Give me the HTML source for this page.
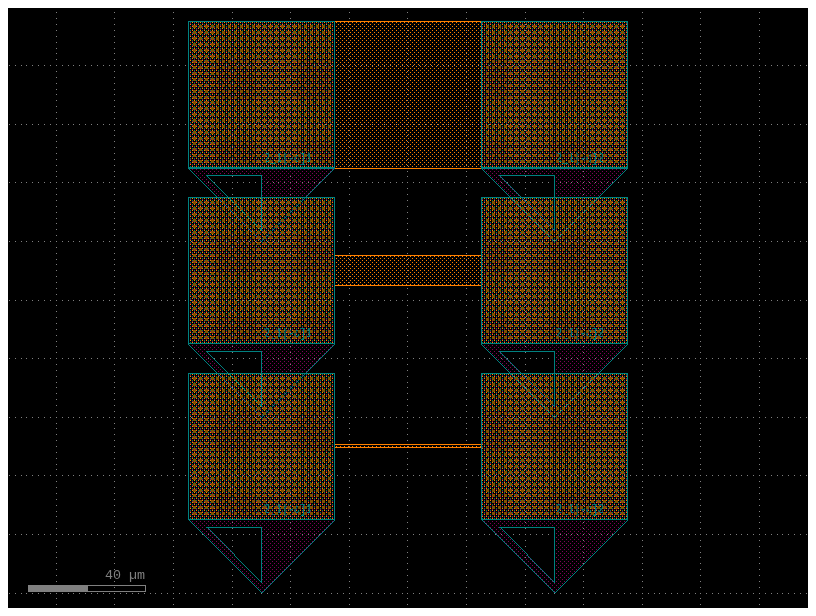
<!DOCTYPE html><html><head><meta charset="utf-8"><title>layout</title>
<style>html,body{margin:0;padding:0;background:#fff;overflow:hidden}svg{display:block;position:absolute;left:0;top:0}text{font-family:"Liberation Mono",monospace}</style></head><body>
<svg width="816" height="616" viewBox="0 0 816 616" shape-rendering="crispEdges">
<defs>
<pattern id="po" x="0" y="0" width="4" height="4" patternUnits="userSpaceOnUse"><rect x="0" y="2" width="1" height="1" fill="#ff8000"/><rect x="2" y="0" width="1" height="1" fill="#ff8000"/></pattern>
<pattern id="pg" x="0" y="0" width="4" height="4" patternUnits="userSpaceOnUse"><rect x="0" y="0" width="1" height="1" fill="#008050"/><rect x="2" y="2" width="1" height="1" fill="#008050"/></pattern>
<pattern id="pm" x="0" y="0" width="4" height="4" patternUnits="userSpaceOnUse"><rect x="0" y="1" width="1" height="1" fill="#800057"/><rect x="2" y="3" width="1" height="1" fill="#800057"/></pattern>
<clipPath id="vr0"><rect x="0" y="25" width="816" height="3"/><rect x="0" y="31" width="816" height="3"/><rect x="0" y="37" width="816" height="3"/><rect x="0" y="43" width="816" height="3"/><rect x="0" y="49" width="816" height="3"/><rect x="0" y="55" width="816" height="3"/><rect x="0" y="60" width="816" height="3"/><rect x="0" y="66" width="816" height="3"/><rect x="0" y="72" width="816" height="3"/><rect x="0" y="78" width="816" height="3"/><rect x="0" y="84" width="816" height="3"/><rect x="0" y="90" width="816" height="3"/><rect x="0" y="96" width="816" height="3"/><rect x="0" y="101" width="816" height="3"/><rect x="0" y="107" width="816" height="3"/><rect x="0" y="113" width="816" height="3"/><rect x="0" y="119" width="816" height="3"/><rect x="0" y="125" width="816" height="3"/><rect x="0" y="131" width="816" height="3"/><rect x="0" y="137" width="816" height="3"/><rect x="0" y="142" width="816" height="3"/><rect x="0" y="148" width="816" height="3"/><rect x="0" y="154" width="816" height="3"/><rect x="0" y="160" width="816" height="3"/></clipPath>
<clipPath id="vr1"><rect x="0" y="201" width="816" height="3"/><rect x="0" y="207" width="816" height="3"/><rect x="0" y="213" width="816" height="3"/><rect x="0" y="219" width="816" height="3"/><rect x="0" y="225" width="816" height="3"/><rect x="0" y="231" width="816" height="3"/><rect x="0" y="236" width="816" height="3"/><rect x="0" y="242" width="816" height="3"/><rect x="0" y="248" width="816" height="3"/><rect x="0" y="254" width="816" height="3"/><rect x="0" y="260" width="816" height="3"/><rect x="0" y="266" width="816" height="3"/><rect x="0" y="272" width="816" height="3"/><rect x="0" y="277" width="816" height="3"/><rect x="0" y="283" width="816" height="3"/><rect x="0" y="289" width="816" height="3"/><rect x="0" y="295" width="816" height="3"/><rect x="0" y="301" width="816" height="3"/><rect x="0" y="307" width="816" height="3"/><rect x="0" y="313" width="816" height="3"/><rect x="0" y="318" width="816" height="3"/><rect x="0" y="324" width="816" height="3"/><rect x="0" y="330" width="816" height="3"/><rect x="0" y="336" width="816" height="3"/></clipPath>
<clipPath id="vr2"><rect x="0" y="377" width="816" height="3"/><rect x="0" y="383" width="816" height="3"/><rect x="0" y="389" width="816" height="3"/><rect x="0" y="395" width="816" height="3"/><rect x="0" y="401" width="816" height="3"/><rect x="0" y="407" width="816" height="3"/><rect x="0" y="412" width="816" height="3"/><rect x="0" y="418" width="816" height="3"/><rect x="0" y="424" width="816" height="3"/><rect x="0" y="430" width="816" height="3"/><rect x="0" y="436" width="816" height="3"/><rect x="0" y="442" width="816" height="3"/><rect x="0" y="448" width="816" height="3"/><rect x="0" y="453" width="816" height="3"/><rect x="0" y="459" width="816" height="3"/><rect x="0" y="465" width="816" height="3"/><rect x="0" y="471" width="816" height="3"/><rect x="0" y="477" width="816" height="3"/><rect x="0" y="483" width="816" height="3"/><rect x="0" y="489" width="816" height="3"/><rect x="0" y="494" width="816" height="3"/><rect x="0" y="500" width="816" height="3"/><rect x="0" y="506" width="816" height="3"/><rect x="0" y="512" width="816" height="3"/></clipPath>
<clipPath id="gcx"><rect x="9" y="0" width="1" height="616"/><rect x="15" y="0" width="1" height="616"/><rect x="21" y="0" width="1" height="616"/><rect x="26" y="0" width="1" height="616"/><rect x="32" y="0" width="1" height="616"/><rect x="38" y="0" width="1" height="616"/><rect x="44" y="0" width="1" height="616"/><rect x="50" y="0" width="1" height="616"/><rect x="56" y="0" width="1" height="616"/><rect x="62" y="0" width="1" height="616"/><rect x="68" y="0" width="1" height="616"/><rect x="73" y="0" width="1" height="616"/><rect x="79" y="0" width="1" height="616"/><rect x="85" y="0" width="1" height="616"/><rect x="91" y="0" width="1" height="616"/><rect x="97" y="0" width="1" height="616"/><rect x="103" y="0" width="1" height="616"/><rect x="109" y="0" width="1" height="616"/><rect x="114" y="0" width="1" height="616"/><rect x="120" y="0" width="1" height="616"/><rect x="126" y="0" width="1" height="616"/><rect x="132" y="0" width="1" height="616"/><rect x="138" y="0" width="1" height="616"/><rect x="144" y="0" width="1" height="616"/><rect x="150" y="0" width="1" height="616"/><rect x="155" y="0" width="1" height="616"/><rect x="161" y="0" width="1" height="616"/><rect x="167" y="0" width="1" height="616"/><rect x="173" y="0" width="1" height="616"/><rect x="179" y="0" width="1" height="616"/><rect x="185" y="0" width="1" height="616"/><rect x="191" y="0" width="1" height="616"/><rect x="196" y="0" width="1" height="616"/><rect x="202" y="0" width="1" height="616"/><rect x="208" y="0" width="1" height="616"/><rect x="214" y="0" width="1" height="616"/><rect x="220" y="0" width="1" height="616"/><rect x="226" y="0" width="1" height="616"/><rect x="232" y="0" width="1" height="616"/><rect x="237" y="0" width="1" height="616"/><rect x="243" y="0" width="1" height="616"/><rect x="249" y="0" width="1" height="616"/><rect x="255" y="0" width="1" height="616"/><rect x="261" y="0" width="1" height="616"/><rect x="267" y="0" width="1" height="616"/><rect x="273" y="0" width="1" height="616"/><rect x="278" y="0" width="1" height="616"/><rect x="284" y="0" width="1" height="616"/><rect x="290" y="0" width="1" height="616"/><rect x="296" y="0" width="1" height="616"/><rect x="302" y="0" width="1" height="616"/><rect x="308" y="0" width="1" height="616"/><rect x="314" y="0" width="1" height="616"/><rect x="319" y="0" width="1" height="616"/><rect x="325" y="0" width="1" height="616"/><rect x="331" y="0" width="1" height="616"/><rect x="337" y="0" width="1" height="616"/><rect x="343" y="0" width="1" height="616"/><rect x="349" y="0" width="1" height="616"/><rect x="355" y="0" width="1" height="616"/><rect x="361" y="0" width="1" height="616"/><rect x="366" y="0" width="1" height="616"/><rect x="372" y="0" width="1" height="616"/><rect x="378" y="0" width="1" height="616"/><rect x="384" y="0" width="1" height="616"/><rect x="390" y="0" width="1" height="616"/><rect x="396" y="0" width="1" height="616"/><rect x="402" y="0" width="1" height="616"/><rect x="407" y="0" width="1" height="616"/><rect x="413" y="0" width="1" height="616"/><rect x="419" y="0" width="1" height="616"/><rect x="425" y="0" width="1" height="616"/><rect x="431" y="0" width="1" height="616"/><rect x="437" y="0" width="1" height="616"/><rect x="443" y="0" width="1" height="616"/><rect x="448" y="0" width="1" height="616"/><rect x="454" y="0" width="1" height="616"/><rect x="460" y="0" width="1" height="616"/><rect x="466" y="0" width="1" height="616"/><rect x="472" y="0" width="1" height="616"/><rect x="478" y="0" width="1" height="616"/><rect x="484" y="0" width="1" height="616"/><rect x="489" y="0" width="1" height="616"/><rect x="495" y="0" width="1" height="616"/><rect x="501" y="0" width="1" height="616"/><rect x="507" y="0" width="1" height="616"/><rect x="513" y="0" width="1" height="616"/><rect x="519" y="0" width="1" height="616"/><rect x="525" y="0" width="1" height="616"/><rect x="530" y="0" width="1" height="616"/><rect x="536" y="0" width="1" height="616"/><rect x="542" y="0" width="1" height="616"/><rect x="548" y="0" width="1" height="616"/><rect x="554" y="0" width="1" height="616"/><rect x="560" y="0" width="1" height="616"/><rect x="566" y="0" width="1" height="616"/><rect x="571" y="0" width="1" height="616"/><rect x="577" y="0" width="1" height="616"/><rect x="583" y="0" width="1" height="616"/><rect x="589" y="0" width="1" height="616"/><rect x="595" y="0" width="1" height="616"/><rect x="601" y="0" width="1" height="616"/><rect x="607" y="0" width="1" height="616"/><rect x="612" y="0" width="1" height="616"/><rect x="618" y="0" width="1" height="616"/><rect x="624" y="0" width="1" height="616"/><rect x="630" y="0" width="1" height="616"/><rect x="636" y="0" width="1" height="616"/><rect x="642" y="0" width="1" height="616"/><rect x="648" y="0" width="1" height="616"/><rect x="654" y="0" width="1" height="616"/><rect x="659" y="0" width="1" height="616"/><rect x="665" y="0" width="1" height="616"/><rect x="671" y="0" width="1" height="616"/><rect x="677" y="0" width="1" height="616"/><rect x="683" y="0" width="1" height="616"/><rect x="689" y="0" width="1" height="616"/><rect x="695" y="0" width="1" height="616"/><rect x="700" y="0" width="1" height="616"/><rect x="706" y="0" width="1" height="616"/><rect x="712" y="0" width="1" height="616"/><rect x="718" y="0" width="1" height="616"/><rect x="724" y="0" width="1" height="616"/><rect x="730" y="0" width="1" height="616"/><rect x="736" y="0" width="1" height="616"/><rect x="741" y="0" width="1" height="616"/><rect x="747" y="0" width="1" height="616"/><rect x="753" y="0" width="1" height="616"/><rect x="759" y="0" width="1" height="616"/><rect x="765" y="0" width="1" height="616"/><rect x="771" y="0" width="1" height="616"/><rect x="777" y="0" width="1" height="616"/><rect x="782" y="0" width="1" height="616"/><rect x="788" y="0" width="1" height="616"/><rect x="794" y="0" width="1" height="616"/><rect x="800" y="0" width="1" height="616"/><rect x="806" y="0" width="1" height="616"/></clipPath>
<clipPath id="gcy"><rect x="0" y="12" width="816" height="1"/><rect x="0" y="18" width="816" height="1"/><rect x="0" y="24" width="816" height="1"/><rect x="0" y="30" width="816" height="1"/><rect x="0" y="36" width="816" height="1"/><rect x="0" y="42" width="816" height="1"/><rect x="0" y="48" width="816" height="1"/><rect x="0" y="53" width="816" height="1"/><rect x="0" y="59" width="816" height="1"/><rect x="0" y="65" width="816" height="1"/><rect x="0" y="71" width="816" height="1"/><rect x="0" y="77" width="816" height="1"/><rect x="0" y="83" width="816" height="1"/><rect x="0" y="89" width="816" height="1"/><rect x="0" y="94" width="816" height="1"/><rect x="0" y="100" width="816" height="1"/><rect x="0" y="106" width="816" height="1"/><rect x="0" y="112" width="816" height="1"/><rect x="0" y="118" width="816" height="1"/><rect x="0" y="124" width="816" height="1"/><rect x="0" y="130" width="816" height="1"/><rect x="0" y="135" width="816" height="1"/><rect x="0" y="141" width="816" height="1"/><rect x="0" y="147" width="816" height="1"/><rect x="0" y="153" width="816" height="1"/><rect x="0" y="159" width="816" height="1"/><rect x="0" y="165" width="816" height="1"/><rect x="0" y="171" width="816" height="1"/><rect x="0" y="176" width="816" height="1"/><rect x="0" y="182" width="816" height="1"/><rect x="0" y="188" width="816" height="1"/><rect x="0" y="194" width="816" height="1"/><rect x="0" y="200" width="816" height="1"/><rect x="0" y="206" width="816" height="1"/><rect x="0" y="212" width="816" height="1"/><rect x="0" y="218" width="816" height="1"/><rect x="0" y="223" width="816" height="1"/><rect x="0" y="229" width="816" height="1"/><rect x="0" y="235" width="816" height="1"/><rect x="0" y="241" width="816" height="1"/><rect x="0" y="247" width="816" height="1"/><rect x="0" y="253" width="816" height="1"/><rect x="0" y="259" width="816" height="1"/><rect x="0" y="264" width="816" height="1"/><rect x="0" y="270" width="816" height="1"/><rect x="0" y="276" width="816" height="1"/><rect x="0" y="282" width="816" height="1"/><rect x="0" y="288" width="816" height="1"/><rect x="0" y="294" width="816" height="1"/><rect x="0" y="300" width="816" height="1"/><rect x="0" y="305" width="816" height="1"/><rect x="0" y="311" width="816" height="1"/><rect x="0" y="317" width="816" height="1"/><rect x="0" y="323" width="816" height="1"/><rect x="0" y="329" width="816" height="1"/><rect x="0" y="335" width="816" height="1"/><rect x="0" y="341" width="816" height="1"/><rect x="0" y="346" width="816" height="1"/><rect x="0" y="352" width="816" height="1"/><rect x="0" y="358" width="816" height="1"/><rect x="0" y="364" width="816" height="1"/><rect x="0" y="370" width="816" height="1"/><rect x="0" y="376" width="816" height="1"/><rect x="0" y="382" width="816" height="1"/><rect x="0" y="387" width="816" height="1"/><rect x="0" y="393" width="816" height="1"/><rect x="0" y="399" width="816" height="1"/><rect x="0" y="405" width="816" height="1"/><rect x="0" y="411" width="816" height="1"/><rect x="0" y="417" width="816" height="1"/><rect x="0" y="423" width="816" height="1"/><rect x="0" y="428" width="816" height="1"/><rect x="0" y="434" width="816" height="1"/><rect x="0" y="440" width="816" height="1"/><rect x="0" y="446" width="816" height="1"/><rect x="0" y="452" width="816" height="1"/><rect x="0" y="458" width="816" height="1"/><rect x="0" y="464" width="816" height="1"/><rect x="0" y="469" width="816" height="1"/><rect x="0" y="475" width="816" height="1"/><rect x="0" y="481" width="816" height="1"/><rect x="0" y="487" width="816" height="1"/><rect x="0" y="493" width="816" height="1"/><rect x="0" y="499" width="816" height="1"/><rect x="0" y="505" width="816" height="1"/><rect x="0" y="511" width="816" height="1"/><rect x="0" y="516" width="816" height="1"/><rect x="0" y="522" width="816" height="1"/><rect x="0" y="528" width="816" height="1"/><rect x="0" y="534" width="816" height="1"/><rect x="0" y="540" width="816" height="1"/><rect x="0" y="546" width="816" height="1"/><rect x="0" y="552" width="816" height="1"/><rect x="0" y="557" width="816" height="1"/><rect x="0" y="563" width="816" height="1"/><rect x="0" y="569" width="816" height="1"/><rect x="0" y="575" width="816" height="1"/><rect x="0" y="581" width="816" height="1"/><rect x="0" y="587" width="816" height="1"/><rect x="0" y="593" width="816" height="1"/><rect x="0" y="598" width="816" height="1"/><rect x="0" y="604" width="816" height="1"/></clipPath>
</defs>
<rect x="0" y="0" width="816" height="616" fill="#fff"/>
<rect x="8" y="8" width="800" height="600" fill="#000"/>
<path clip-path="url(#gcx)" fill="#808080" d="M8 65h800v1h-800zM8 124h800v1h-800zM8 182h800v1h-800zM8 241h800v1h-800zM8 300h800v1h-800zM8 358h800v1h-800zM8 417h800v1h-800zM8 475h800v1h-800zM8 534h800v1h-800zM8 593h800v1h-800z"/>
<path clip-path="url(#gcy)" fill="#808080" d="M56 8h1v600h-1zM114 8h1v600h-1zM173 8h1v600h-1zM232 8h1v600h-1zM290 8h1v600h-1zM349 8h1v600h-1zM407 8h1v600h-1zM466 8h1v600h-1zM525 8h1v600h-1zM583 8h1v600h-1zM642 8h1v600h-1zM700 8h1v600h-1zM759 8h1v600h-1z"/>
<rect x="188" y="21" width="147" height="148" fill="url(#pm)"/>
<path fill-rule="evenodd" fill="url(#pm)" d="M188.5 168.5L334.5 168.5L261.5 241.5L261.5 241.5ZM206.5 175.5L261.5 175.5L261.5 230.5Z"/>
<rect x="188" y="197" width="147" height="147" fill="url(#pm)"/>
<path fill-rule="evenodd" fill="url(#pm)" d="M188.5 344.5L334.5 344.5L261.5 417.5L261.5 417.5ZM206.5 351.5L261.5 351.5L261.5 406.5Z"/>
<rect x="188" y="373" width="147" height="147" fill="url(#pm)"/>
<path fill-rule="evenodd" fill="url(#pm)" d="M188.5 519.5L334.5 520.5L262.5 592.5L261.5 592.5ZM207.5 527.5L261.5 527.5L261.5 582.5Z"/>
<rect x="481" y="21" width="147" height="148" fill="url(#pm)"/>
<path fill-rule="evenodd" fill="url(#pm)" d="M481.5 168.5L627.5 168.5L554.5 241.5L554.5 241.5ZM499.5 175.5L554.5 175.5L554.5 230.5Z"/>
<rect x="481" y="197" width="147" height="147" fill="url(#pm)"/>
<path fill-rule="evenodd" fill="url(#pm)" d="M481.5 344.5L627.5 344.5L554.5 417.5L554.5 417.5ZM499.5 351.5L554.5 351.5L554.5 406.5Z"/>
<rect x="481" y="373" width="147" height="147" fill="url(#pm)"/>
<path fill-rule="evenodd" fill="url(#pm)" d="M481.5 519.5L627.5 520.5L555.5 592.5L554.5 592.5ZM500.5 527.5L554.5 527.5L554.5 582.5Z"/>
<rect x="188" y="21" width="147" height="148" fill="url(#pg)"/>
<rect x="188" y="197" width="147" height="147" fill="url(#pg)"/>
<rect x="188" y="373" width="147" height="147" fill="url(#pg)"/>
<rect x="481" y="21" width="147" height="148" fill="url(#pg)"/>
<rect x="481" y="197" width="147" height="147" fill="url(#pg)"/>
<rect x="481" y="373" width="147" height="147" fill="url(#pg)"/>
<g style="mix-blend-mode:lighten">
<rect x="188" y="21" width="147" height="148" fill="url(#po)"/>
<rect x="188" y="197" width="147" height="147" fill="url(#po)"/>
<rect x="188" y="373" width="147" height="147" fill="url(#po)"/>
<rect x="481" y="21" width="147" height="148" fill="url(#po)"/>
<rect x="481" y="197" width="147" height="147" fill="url(#po)"/>
<rect x="481" y="373" width="147" height="147" fill="url(#po)"/>
<rect x="335" y="21" width="146" height="148" fill="url(#po)"/>
<rect x="335" y="255" width="146" height="31" fill="url(#po)"/>
<rect x="335" y="444" width="146" height="4" fill="url(#po)"/>
</g>
<rect x="335" y="21" width="146" height="1" fill="#ff8000"/><rect x="335" y="168" width="146" height="1" fill="#ff8000"/>
<rect x="335" y="255" width="146" height="1" fill="#ff8000"/><rect x="335" y="285" width="146" height="1" fill="#ff8000"/>
<rect x="335" y="444" width="146" height="1" fill="#ff8000"/><rect x="335" y="447" width="146" height="1" fill="#ff8000"/>
<path fill="#008080" d="M188 167h1v1h-1zM188 168h1v1h-1zM188 343h1v1h-1zM188 344h1v1h-1zM188 519h1v1h-1zM189 167h1v1h-1zM189 168h1v1h-1zM189 169h1v1h-1zM189 343h1v1h-1zM189 345h1v1h-1zM189 519h1v1h-1zM189 520h1v1h-1zM190 167h1v1h-1zM190 168h1v1h-1zM190 170h1v1h-1zM190 343h1v1h-1zM190 346h1v1h-1zM190 519h1v1h-1zM190 521h1v1h-1zM191 167h1v1h-1zM191 168h1v1h-1zM191 171h1v1h-1zM191 343h1v1h-1zM191 347h1v1h-1zM191 519h1v1h-1zM191 522h1v1h-1zM192 167h1v1h-1zM192 168h1v1h-1zM192 172h1v1h-1zM192 343h1v1h-1zM192 348h1v1h-1zM192 519h1v1h-1zM192 523h1v1h-1zM193 167h1v1h-1zM193 168h1v1h-1zM193 173h1v1h-1zM193 343h1v1h-1zM193 349h1v1h-1zM193 519h1v1h-1zM193 524h1v1h-1zM194 167h1v1h-1zM194 168h1v1h-1zM194 174h1v1h-1zM194 343h1v1h-1zM194 350h1v1h-1zM194 519h1v1h-1zM194 525h1v1h-1zM195 167h1v1h-1zM195 168h1v1h-1zM195 175h1v1h-1zM195 343h1v1h-1zM195 351h1v1h-1zM195 519h1v1h-1zM195 526h1v1h-1zM196 167h1v1h-1zM196 168h1v1h-1zM196 176h1v1h-1zM196 343h1v1h-1zM196 352h1v1h-1zM196 519h1v1h-1zM196 527h1v1h-1zM197 167h1v1h-1zM197 168h1v1h-1zM197 177h1v1h-1zM197 343h1v1h-1zM197 353h1v1h-1zM197 519h1v1h-1zM197 528h1v1h-1zM198 167h1v1h-1zM198 168h1v1h-1zM198 178h1v1h-1zM198 343h1v1h-1zM198 354h1v1h-1zM198 519h1v1h-1zM198 529h1v1h-1zM199 167h1v1h-1zM199 168h1v1h-1zM199 179h1v1h-1zM199 343h1v1h-1zM199 355h1v1h-1zM199 519h1v1h-1zM199 530h1v1h-1zM200 167h1v1h-1zM200 168h1v1h-1zM200 180h1v1h-1zM200 343h1v1h-1zM200 356h1v1h-1zM200 519h1v1h-1zM200 531h1v1h-1zM201 167h1v1h-1zM201 168h1v1h-1zM201 181h1v1h-1zM201 343h1v1h-1zM201 357h1v1h-1zM201 519h1v1h-1zM201 532h1v1h-1zM202 167h1v1h-1zM202 168h1v1h-1zM202 182h1v1h-1zM202 343h1v1h-1zM202 358h1v1h-1zM202 519h1v1h-1zM202 533h1v1h-1zM203 167h1v1h-1zM203 168h1v1h-1zM203 183h1v1h-1zM203 343h1v1h-1zM203 359h1v1h-1zM203 519h1v1h-1zM203 534h1v1h-1zM204 167h1v1h-1zM204 168h1v1h-1zM204 184h1v1h-1zM204 343h1v1h-1zM204 360h1v1h-1zM204 519h1v1h-1zM204 535h1v1h-1zM205 167h1v1h-1zM205 168h1v1h-1zM205 185h1v1h-1zM205 343h1v1h-1zM205 361h1v1h-1zM205 519h1v1h-1zM205 536h1v1h-1zM206 167h1v1h-1zM206 168h1v1h-1zM206 175h1v1h-1zM206 186h1v1h-1zM206 343h1v1h-1zM206 351h1v1h-1zM206 362h1v1h-1zM206 519h1v1h-1zM206 527h1v1h-1zM206 537h1v1h-1zM207 167h1v1h-1zM207 168h1v1h-1zM207 175h1v1h-1zM207 176h1v1h-1zM207 187h1v1h-1zM207 343h1v1h-1zM207 351h1v1h-1zM207 352h1v1h-1zM207 363h1v1h-1zM207 519h1v1h-1zM207 527h1v1h-1zM207 538h1v1h-1zM208 167h1v1h-1zM208 168h1v1h-1zM208 175h1v1h-1zM208 177h1v1h-1zM208 188h1v1h-1zM208 343h1v1h-1zM208 351h1v1h-1zM208 353h1v1h-1zM208 364h1v1h-1zM208 519h1v1h-1zM208 527h1v1h-1zM208 528h1v1h-1zM208 539h1v1h-1zM209 167h1v1h-1zM209 168h1v1h-1zM209 175h1v1h-1zM209 178h1v1h-1zM209 189h1v1h-1zM209 343h1v1h-1zM209 351h1v1h-1zM209 354h1v1h-1zM209 365h1v1h-1zM209 519h1v1h-1zM209 527h1v1h-1zM209 529h1v1h-1zM209 540h1v1h-1zM210 167h1v1h-1zM210 168h1v1h-1zM210 175h1v1h-1zM210 179h1v1h-1zM210 190h1v1h-1zM210 343h1v1h-1zM210 351h1v1h-1zM210 355h1v1h-1zM210 366h1v1h-1zM210 519h1v1h-1zM210 527h1v1h-1zM210 530h1v1h-1zM210 541h1v1h-1zM211 167h1v1h-1zM211 168h1v1h-1zM211 175h1v1h-1zM211 180h1v1h-1zM211 191h1v1h-1zM211 343h1v1h-1zM211 351h1v1h-1zM211 356h1v1h-1zM211 367h1v1h-1zM211 519h1v1h-1zM211 527h1v1h-1zM211 531h1v1h-1zM211 542h1v1h-1zM212 167h1v1h-1zM212 168h1v1h-1zM212 175h1v1h-1zM212 181h1v1h-1zM212 192h1v1h-1zM212 343h1v1h-1zM212 351h1v1h-1zM212 357h1v1h-1zM212 368h1v1h-1zM212 519h1v1h-1zM212 527h1v1h-1zM212 532h1v1h-1zM212 543h1v1h-1zM213 167h1v1h-1zM213 168h1v1h-1zM213 175h1v1h-1zM213 182h1v1h-1zM213 193h1v1h-1zM213 343h1v1h-1zM213 351h1v1h-1zM213 358h1v1h-1zM213 369h1v1h-1zM213 519h1v1h-1zM213 527h1v1h-1zM213 533h1v1h-1zM213 544h1v1h-1zM214 167h1v1h-1zM214 168h1v1h-1zM214 175h1v1h-1zM214 183h1v1h-1zM214 194h1v1h-1zM214 343h1v1h-1zM214 351h1v1h-1zM214 359h1v1h-1zM214 370h1v1h-1zM214 519h1v1h-1zM214 527h1v1h-1zM214 534h1v1h-1zM214 545h1v1h-1zM215 167h1v1h-1zM215 168h1v1h-1zM215 175h1v1h-1zM215 184h1v1h-1zM215 195h1v1h-1zM215 343h1v1h-1zM215 351h1v1h-1zM215 360h1v1h-1zM215 371h1v1h-1zM215 519h1v1h-1zM215 527h1v1h-1zM215 535h1v1h-1zM215 546h1v1h-1zM216 167h1v1h-1zM216 168h1v1h-1zM216 175h1v1h-1zM216 185h1v1h-1zM216 196h1v1h-1zM216 343h1v1h-1zM216 351h1v1h-1zM216 361h1v1h-1zM216 372h1v1h-1zM216 519h1v1h-1zM216 527h1v1h-1zM216 536h1v1h-1zM216 547h1v1h-1zM217 167h1v1h-1zM217 168h1v1h-1zM217 175h1v1h-1zM217 186h1v1h-1zM217 197h1v1h-1zM217 343h1v1h-1zM217 351h1v1h-1zM217 362h1v1h-1zM217 373h1v1h-1zM217 519h1v1h-1zM217 527h1v1h-1zM217 537h1v1h-1zM217 548h1v1h-1zM218 167h1v1h-1zM218 168h1v1h-1zM218 175h1v1h-1zM218 187h1v1h-1zM218 198h1v1h-1zM218 343h1v1h-1zM218 351h1v1h-1zM218 363h1v1h-1zM218 374h1v1h-1zM218 519h1v1h-1zM218 527h1v1h-1zM218 538h1v1h-1zM218 549h1v1h-1zM219 167h1v1h-1zM219 168h1v1h-1zM219 175h1v1h-1zM219 188h1v1h-1zM219 199h1v1h-1zM219 343h1v1h-1zM219 351h1v1h-1zM219 364h1v1h-1zM219 375h1v1h-1zM219 519h1v1h-1zM219 527h1v1h-1zM219 539h1v1h-1zM219 550h1v1h-1zM220 167h1v1h-1zM220 168h1v1h-1zM220 175h1v1h-1zM220 189h1v1h-1zM220 200h1v1h-1zM220 343h1v1h-1zM220 351h1v1h-1zM220 365h1v1h-1zM220 376h1v1h-1zM220 519h1v1h-1zM220 527h1v1h-1zM220 540h1v1h-1zM220 551h1v1h-1zM221 167h1v1h-1zM221 168h1v1h-1zM221 175h1v1h-1zM221 190h1v1h-1zM221 201h1v1h-1zM221 343h1v1h-1zM221 351h1v1h-1zM221 366h1v1h-1zM221 377h1v1h-1zM221 519h1v1h-1zM221 527h1v1h-1zM221 541h1v1h-1zM221 552h1v1h-1zM222 167h1v1h-1zM222 168h1v1h-1zM222 175h1v1h-1zM222 191h1v1h-1zM222 202h1v1h-1zM222 343h1v1h-1zM222 351h1v1h-1zM222 367h1v1h-1zM222 378h1v1h-1zM222 519h1v1h-1zM222 527h1v1h-1zM222 542h1v1h-1zM222 553h1v1h-1zM223 167h1v1h-1zM223 168h1v1h-1zM223 175h1v1h-1zM223 192h1v1h-1zM223 203h1v1h-1zM223 343h1v1h-1zM223 351h1v1h-1zM223 368h1v1h-1zM223 379h1v1h-1zM223 519h1v1h-1zM223 527h1v1h-1zM223 543h1v1h-1zM223 554h1v1h-1zM224 167h1v1h-1zM224 168h1v1h-1zM224 175h1v1h-1zM224 193h1v1h-1zM224 204h1v1h-1zM224 343h1v1h-1zM224 351h1v1h-1zM224 369h1v1h-1zM224 380h1v1h-1zM224 519h1v1h-1zM224 527h1v1h-1zM224 544h1v1h-1zM224 555h1v1h-1zM225 167h1v1h-1zM225 168h1v1h-1zM225 175h1v1h-1zM225 194h1v1h-1zM225 205h1v1h-1zM225 343h1v1h-1zM225 351h1v1h-1zM225 370h1v1h-1zM225 381h1v1h-1zM225 519h1v1h-1zM225 527h1v1h-1zM225 545h1v1h-1zM225 556h1v1h-1zM226 167h1v1h-1zM226 168h1v1h-1zM226 175h1v1h-1zM226 195h1v1h-1zM226 206h1v1h-1zM226 343h1v1h-1zM226 351h1v1h-1zM226 371h1v1h-1zM226 382h1v1h-1zM226 519h1v1h-1zM226 527h1v1h-1zM226 546h1v1h-1zM226 557h1v1h-1zM227 167h1v1h-1zM227 168h1v1h-1zM227 175h1v1h-1zM227 196h1v1h-1zM227 207h1v1h-1zM227 343h1v1h-1zM227 351h1v1h-1zM227 372h1v1h-1zM227 383h1v1h-1zM227 519h1v1h-1zM227 527h1v1h-1zM227 547h1v1h-1zM227 558h1v1h-1zM228 167h1v1h-1zM228 168h1v1h-1zM228 175h1v1h-1zM228 197h1v1h-1zM228 208h1v1h-1zM228 343h1v1h-1zM228 351h1v1h-1zM228 373h1v1h-1zM228 384h1v1h-1zM228 519h1v1h-1zM228 527h1v1h-1zM228 548h1v1h-1zM228 559h1v1h-1zM229 167h1v1h-1zM229 168h1v1h-1zM229 175h1v1h-1zM229 198h1v1h-1zM229 209h1v1h-1zM229 343h1v1h-1zM229 351h1v1h-1zM229 374h1v1h-1zM229 385h1v1h-1zM229 519h1v1h-1zM229 527h1v1h-1zM229 549h1v1h-1zM229 560h1v1h-1zM230 167h1v1h-1zM230 168h1v1h-1zM230 175h1v1h-1zM230 199h1v1h-1zM230 210h1v1h-1zM230 343h1v1h-1zM230 351h1v1h-1zM230 375h1v1h-1zM230 386h1v1h-1zM230 519h1v1h-1zM230 527h1v1h-1zM230 550h1v1h-1zM230 561h1v1h-1zM231 167h1v1h-1zM231 168h1v1h-1zM231 175h1v1h-1zM231 200h1v1h-1zM231 211h1v1h-1zM231 343h1v1h-1zM231 351h1v1h-1zM231 376h1v1h-1zM231 387h1v1h-1zM231 519h1v1h-1zM231 527h1v1h-1zM231 551h1v1h-1zM231 562h1v1h-1zM232 167h1v1h-1zM232 168h1v1h-1zM232 175h1v1h-1zM232 201h1v1h-1zM232 212h1v1h-1zM232 343h1v1h-1zM232 351h1v1h-1zM232 377h1v1h-1zM232 388h1v1h-1zM232 519h1v1h-1zM232 527h1v1h-1zM232 552h1v1h-1zM232 563h1v1h-1zM233 167h1v1h-1zM233 168h1v1h-1zM233 175h1v1h-1zM233 202h1v1h-1zM233 213h1v1h-1zM233 343h1v1h-1zM233 351h1v1h-1zM233 378h1v1h-1zM233 389h1v1h-1zM233 519h1v1h-1zM233 527h1v1h-1zM233 553h1v1h-1zM233 564h1v1h-1zM234 167h1v1h-1zM234 168h1v1h-1zM234 175h1v1h-1zM234 203h1v1h-1zM234 214h1v1h-1zM234 343h1v1h-1zM234 351h1v1h-1zM234 379h1v1h-1zM234 390h1v1h-1zM234 519h1v1h-1zM234 527h1v1h-1zM234 554h1v1h-1zM234 555h1v1h-1zM234 565h1v1h-1zM235 167h1v1h-1zM235 168h1v1h-1zM235 175h1v1h-1zM235 204h1v1h-1zM235 215h1v1h-1zM235 343h1v1h-1zM235 351h1v1h-1zM235 380h1v1h-1zM235 391h1v1h-1zM235 519h1v1h-1zM235 527h1v1h-1zM235 556h1v1h-1zM235 566h1v1h-1zM236 167h1v1h-1zM236 168h1v1h-1zM236 175h1v1h-1zM236 205h1v1h-1zM236 216h1v1h-1zM236 343h1v1h-1zM236 351h1v1h-1zM236 381h1v1h-1zM236 392h1v1h-1zM236 519h1v1h-1zM236 527h1v1h-1zM236 557h1v1h-1zM236 567h1v1h-1zM237 167h1v1h-1zM237 168h1v1h-1zM237 175h1v1h-1zM237 206h1v1h-1zM237 217h1v1h-1zM237 343h1v1h-1zM237 351h1v1h-1zM237 382h1v1h-1zM237 393h1v1h-1zM237 519h1v1h-1zM237 527h1v1h-1zM237 558h1v1h-1zM237 568h1v1h-1zM238 167h1v1h-1zM238 168h1v1h-1zM238 175h1v1h-1zM238 207h1v1h-1zM238 218h1v1h-1zM238 343h1v1h-1zM238 351h1v1h-1zM238 383h1v1h-1zM238 394h1v1h-1zM238 519h1v1h-1zM238 527h1v1h-1zM238 559h1v1h-1zM238 569h1v1h-1zM239 167h1v1h-1zM239 168h1v1h-1zM239 175h1v1h-1zM239 208h1v1h-1zM239 219h1v1h-1zM239 343h1v1h-1zM239 351h1v1h-1zM239 384h1v1h-1zM239 395h1v1h-1zM239 519h1v1h-1zM239 527h1v1h-1zM239 560h1v1h-1zM239 570h1v1h-1zM240 167h1v1h-1zM240 168h1v1h-1zM240 175h1v1h-1zM240 209h1v1h-1zM240 220h1v1h-1zM240 343h1v1h-1zM240 351h1v1h-1zM240 385h1v1h-1zM240 396h1v1h-1zM240 519h1v1h-1zM240 527h1v1h-1zM240 561h1v1h-1zM240 571h1v1h-1zM241 167h1v1h-1zM241 168h1v1h-1zM241 175h1v1h-1zM241 210h1v1h-1zM241 221h1v1h-1zM241 343h1v1h-1zM241 351h1v1h-1zM241 386h1v1h-1zM241 397h1v1h-1zM241 519h1v1h-1zM241 527h1v1h-1zM241 562h1v1h-1zM241 572h1v1h-1zM242 167h1v1h-1zM242 168h1v1h-1zM242 175h1v1h-1zM242 211h1v1h-1zM242 222h1v1h-1zM242 343h1v1h-1zM242 351h1v1h-1zM242 387h1v1h-1zM242 398h1v1h-1zM242 519h1v1h-1zM242 527h1v1h-1zM242 563h1v1h-1zM242 573h1v1h-1zM243 167h1v1h-1zM243 168h1v1h-1zM243 175h1v1h-1zM243 212h1v1h-1zM243 223h1v1h-1zM243 343h1v1h-1zM243 351h1v1h-1zM243 388h1v1h-1zM243 399h1v1h-1zM243 519h1v1h-1zM243 527h1v1h-1zM243 564h1v1h-1zM243 574h1v1h-1zM244 167h1v1h-1zM244 168h1v1h-1zM244 175h1v1h-1zM244 213h1v1h-1zM244 224h1v1h-1zM244 343h1v1h-1zM244 351h1v1h-1zM244 389h1v1h-1zM244 400h1v1h-1zM244 519h1v1h-1zM244 527h1v1h-1zM244 565h1v1h-1zM244 575h1v1h-1zM245 167h1v1h-1zM245 168h1v1h-1zM245 175h1v1h-1zM245 214h1v1h-1zM245 225h1v1h-1zM245 343h1v1h-1zM245 351h1v1h-1zM245 390h1v1h-1zM245 401h1v1h-1zM245 519h1v1h-1zM245 527h1v1h-1zM245 566h1v1h-1zM245 576h1v1h-1zM246 167h1v1h-1zM246 168h1v1h-1zM246 175h1v1h-1zM246 215h1v1h-1zM246 226h1v1h-1zM246 343h1v1h-1zM246 351h1v1h-1zM246 391h1v1h-1zM246 402h1v1h-1zM246 519h1v1h-1zM246 527h1v1h-1zM246 567h1v1h-1zM246 577h1v1h-1zM247 167h1v1h-1zM247 168h1v1h-1zM247 175h1v1h-1zM247 216h1v1h-1zM247 227h1v1h-1zM247 343h1v1h-1zM247 351h1v1h-1zM247 392h1v1h-1zM247 403h1v1h-1zM247 519h1v1h-1zM247 527h1v1h-1zM247 568h1v1h-1zM247 578h1v1h-1zM248 167h1v1h-1zM248 168h1v1h-1zM248 175h1v1h-1zM248 217h1v1h-1zM248 228h1v1h-1zM248 343h1v1h-1zM248 351h1v1h-1zM248 393h1v1h-1zM248 404h1v1h-1zM248 519h1v1h-1zM248 527h1v1h-1zM248 569h1v1h-1zM248 579h1v1h-1zM249 167h1v1h-1zM249 168h1v1h-1zM249 175h1v1h-1zM249 218h1v1h-1zM249 229h1v1h-1zM249 343h1v1h-1zM249 351h1v1h-1zM249 394h1v1h-1zM249 405h1v1h-1zM249 519h1v1h-1zM249 527h1v1h-1zM249 570h1v1h-1zM249 580h1v1h-1zM250 167h1v1h-1zM250 168h1v1h-1zM250 175h1v1h-1zM250 219h1v1h-1zM250 230h1v1h-1zM250 343h1v1h-1zM250 351h1v1h-1zM250 395h1v1h-1zM250 406h1v1h-1zM250 519h1v1h-1zM250 527h1v1h-1zM250 571h1v1h-1zM250 581h1v1h-1zM251 167h1v1h-1zM251 168h1v1h-1zM251 175h1v1h-1zM251 220h1v1h-1zM251 231h1v1h-1zM251 343h1v1h-1zM251 351h1v1h-1zM251 396h1v1h-1zM251 407h1v1h-1zM251 519h1v1h-1zM251 527h1v1h-1zM251 572h1v1h-1zM251 582h1v1h-1zM252 167h1v1h-1zM252 168h1v1h-1zM252 175h1v1h-1zM252 221h1v1h-1zM252 232h1v1h-1zM252 343h1v1h-1zM252 351h1v1h-1zM252 397h1v1h-1zM252 408h1v1h-1zM252 519h1v1h-1zM252 527h1v1h-1zM252 573h1v1h-1zM252 583h1v1h-1zM253 167h1v1h-1zM253 168h1v1h-1zM253 175h1v1h-1zM253 222h1v1h-1zM253 233h1v1h-1zM253 343h1v1h-1zM253 351h1v1h-1zM253 398h1v1h-1zM253 409h1v1h-1zM253 519h1v1h-1zM253 527h1v1h-1zM253 574h1v1h-1zM253 584h1v1h-1zM254 167h1v1h-1zM254 168h1v1h-1zM254 175h1v1h-1zM254 223h1v1h-1zM254 234h1v1h-1zM254 343h1v1h-1zM254 351h1v1h-1zM254 399h1v1h-1zM254 410h1v1h-1zM254 519h1v1h-1zM254 527h1v1h-1zM254 575h1v1h-1zM254 585h1v1h-1zM255 167h1v1h-1zM255 168h1v1h-1zM255 175h1v1h-1zM255 224h1v1h-1zM255 235h1v1h-1zM255 343h1v1h-1zM255 351h1v1h-1zM255 400h1v1h-1zM255 411h1v1h-1zM255 519h1v1h-1zM255 527h1v1h-1zM255 576h1v1h-1zM255 586h1v1h-1zM256 167h1v1h-1zM256 168h1v1h-1zM256 175h1v1h-1zM256 225h1v1h-1zM256 236h1v1h-1zM256 343h1v1h-1zM256 351h1v1h-1zM256 401h1v1h-1zM256 412h1v1h-1zM256 519h1v1h-1zM256 527h1v1h-1zM256 577h1v1h-1zM256 587h1v1h-1zM257 167h1v1h-1zM257 168h1v1h-1zM257 175h1v1h-1zM257 226h1v1h-1zM257 237h1v1h-1zM257 343h1v1h-1zM257 351h1v1h-1zM257 402h1v1h-1zM257 413h1v1h-1zM257 519h1v1h-1zM257 527h1v1h-1zM257 578h1v1h-1zM257 588h1v1h-1zM258 167h1v1h-1zM258 168h1v1h-1zM258 175h1v1h-1zM258 227h1v1h-1zM258 238h1v1h-1zM258 343h1v1h-1zM258 351h1v1h-1zM258 403h1v1h-1zM258 414h1v1h-1zM258 519h1v1h-1zM258 527h1v1h-1zM258 579h1v1h-1zM258 589h1v1h-1zM259 167h1v1h-1zM259 168h1v1h-1zM259 175h1v1h-1zM259 228h1v1h-1zM259 239h1v1h-1zM259 343h1v1h-1zM259 351h1v1h-1zM259 404h1v1h-1zM259 415h1v1h-1zM259 519h1v1h-1zM259 527h1v1h-1zM259 580h1v1h-1zM259 590h1v1h-1zM260 167h1v1h-1zM260 168h1v1h-1zM260 175h1v1h-1zM260 229h1v1h-1zM260 240h1v1h-1zM260 343h1v1h-1zM260 351h1v1h-1zM260 405h1v1h-1zM260 416h1v1h-1zM260 519h1v1h-1zM260 527h1v1h-1zM260 581h1v1h-1zM260 591h1v1h-1zM261 167h1v1h-1zM261 168h1v1h-1zM261 175h1v1h-1zM261 176h1v1h-1zM261 177h1v1h-1zM261 178h1v1h-1zM261 179h1v1h-1zM261 180h1v1h-1zM261 181h1v1h-1zM261 182h1v1h-1zM261 183h1v1h-1zM261 184h1v1h-1zM261 185h1v1h-1zM261 186h1v1h-1zM261 187h1v1h-1zM261 188h1v1h-1zM261 189h1v1h-1zM261 190h1v1h-1zM261 191h1v1h-1zM261 192h1v1h-1zM261 193h1v1h-1zM261 194h1v1h-1zM261 195h1v1h-1zM261 196h1v1h-1zM261 197h1v1h-1zM261 198h1v1h-1zM261 199h1v1h-1zM261 200h1v1h-1zM261 201h1v1h-1zM261 202h1v1h-1zM261 203h1v1h-1zM261 204h1v1h-1zM261 205h1v1h-1zM261 206h1v1h-1zM261 207h1v1h-1zM261 208h1v1h-1zM261 209h1v1h-1zM261 210h1v1h-1zM261 211h1v1h-1zM261 212h1v1h-1zM261 213h1v1h-1zM261 214h1v1h-1zM261 215h1v1h-1zM261 216h1v1h-1zM261 217h1v1h-1zM261 218h1v1h-1zM261 219h1v1h-1zM261 220h1v1h-1zM261 221h1v1h-1zM261 222h1v1h-1zM261 223h1v1h-1zM261 224h1v1h-1zM261 225h1v1h-1zM261 226h1v1h-1zM261 227h1v1h-1zM261 228h1v1h-1zM261 229h1v1h-1zM261 230h1v1h-1zM261 241h1v1h-1zM261 343h1v1h-1zM261 351h1v1h-1zM261 352h1v1h-1zM261 353h1v1h-1zM261 354h1v1h-1zM261 355h1v1h-1zM261 356h1v1h-1zM261 357h1v1h-1zM261 358h1v1h-1zM261 359h1v1h-1zM261 360h1v1h-1zM261 361h1v1h-1zM261 362h1v1h-1zM261 363h1v1h-1zM261 364h1v1h-1zM261 365h1v1h-1zM261 366h1v1h-1zM261 367h1v1h-1zM261 368h1v1h-1zM261 369h1v1h-1zM261 370h1v1h-1zM261 371h1v1h-1zM261 372h1v1h-1zM261 373h1v1h-1zM261 374h1v1h-1zM261 375h1v1h-1zM261 376h1v1h-1zM261 377h1v1h-1zM261 378h1v1h-1zM261 379h1v1h-1zM261 380h1v1h-1zM261 381h1v1h-1zM261 382h1v1h-1zM261 383h1v1h-1zM261 384h1v1h-1zM261 385h1v1h-1zM261 386h1v1h-1zM261 387h1v1h-1zM261 388h1v1h-1zM261 389h1v1h-1zM261 390h1v1h-1zM261 391h1v1h-1zM261 392h1v1h-1zM261 393h1v1h-1zM261 394h1v1h-1zM261 395h1v1h-1zM261 396h1v1h-1zM261 397h1v1h-1zM261 398h1v1h-1zM261 399h1v1h-1zM261 400h1v1h-1zM261 401h1v1h-1zM261 402h1v1h-1zM261 403h1v1h-1zM261 404h1v1h-1zM261 405h1v1h-1zM261 406h1v1h-1zM261 417h1v1h-1zM261 519h1v1h-1zM261 527h1v1h-1zM261 528h1v1h-1zM261 529h1v1h-1zM261 530h1v1h-1zM261 531h1v1h-1zM261 532h1v1h-1zM261 533h1v1h-1zM261 534h1v1h-1zM261 535h1v1h-1zM261 536h1v1h-1zM261 537h1v1h-1zM261 538h1v1h-1zM261 539h1v1h-1zM261 540h1v1h-1zM261 541h1v1h-1zM261 542h1v1h-1zM261 543h1v1h-1zM261 544h1v1h-1zM261 545h1v1h-1zM261 546h1v1h-1zM261 547h1v1h-1zM261 548h1v1h-1zM261 549h1v1h-1zM261 550h1v1h-1zM261 551h1v1h-1zM261 552h1v1h-1zM261 553h1v1h-1zM261 554h1v1h-1zM261 555h1v1h-1zM261 556h1v1h-1zM261 557h1v1h-1zM261 558h1v1h-1zM261 559h1v1h-1zM261 560h1v1h-1zM261 561h1v1h-1zM261 562h1v1h-1zM261 563h1v1h-1zM261 564h1v1h-1zM261 565h1v1h-1zM261 566h1v1h-1zM261 567h1v1h-1zM261 568h1v1h-1zM261 569h1v1h-1zM261 570h1v1h-1zM261 571h1v1h-1zM261 572h1v1h-1zM261 573h1v1h-1zM261 574h1v1h-1zM261 575h1v1h-1zM261 576h1v1h-1zM261 577h1v1h-1zM261 578h1v1h-1zM261 579h1v1h-1zM261 580h1v1h-1zM261 581h1v1h-1zM261 582h1v1h-1zM261 592h1v1h-1zM262 167h1v1h-1zM262 168h1v1h-1zM262 240h1v1h-1zM262 343h1v1h-1zM262 416h1v1h-1zM262 519h1v1h-1zM262 592h1v1h-1zM263 167h1v1h-1zM263 168h1v1h-1zM263 239h1v1h-1zM263 343h1v1h-1zM263 415h1v1h-1zM263 519h1v1h-1zM263 591h1v1h-1zM264 167h1v1h-1zM264 168h1v1h-1zM264 238h1v1h-1zM264 343h1v1h-1zM264 414h1v1h-1zM264 519h1v1h-1zM264 590h1v1h-1zM265 167h1v1h-1zM265 168h1v1h-1zM265 237h1v1h-1zM265 343h1v1h-1zM265 413h1v1h-1zM265 519h1v1h-1zM265 589h1v1h-1zM266 167h1v1h-1zM266 168h1v1h-1zM266 236h1v1h-1zM266 343h1v1h-1zM266 412h1v1h-1zM266 519h1v1h-1zM266 588h1v1h-1zM267 167h1v1h-1zM267 168h1v1h-1zM267 235h1v1h-1zM267 343h1v1h-1zM267 411h1v1h-1zM267 519h1v1h-1zM267 587h1v1h-1zM268 167h1v1h-1zM268 168h1v1h-1zM268 234h1v1h-1zM268 343h1v1h-1zM268 410h1v1h-1zM268 519h1v1h-1zM268 586h1v1h-1zM269 167h1v1h-1zM269 168h1v1h-1zM269 233h1v1h-1zM269 343h1v1h-1zM269 409h1v1h-1zM269 519h1v1h-1zM269 585h1v1h-1zM270 167h1v1h-1zM270 168h1v1h-1zM270 232h1v1h-1zM270 343h1v1h-1zM270 408h1v1h-1zM270 519h1v1h-1zM270 584h1v1h-1zM271 167h1v1h-1zM271 168h1v1h-1zM271 231h1v1h-1zM271 343h1v1h-1zM271 407h1v1h-1zM271 519h1v1h-1zM271 583h1v1h-1zM272 167h1v1h-1zM272 168h1v1h-1zM272 230h1v1h-1zM272 343h1v1h-1zM272 406h1v1h-1zM272 519h1v1h-1zM272 582h1v1h-1zM273 167h1v1h-1zM273 168h1v1h-1zM273 229h1v1h-1zM273 343h1v1h-1zM273 405h1v1h-1zM273 519h1v1h-1zM273 581h1v1h-1zM274 167h1v1h-1zM274 168h1v1h-1zM274 228h1v1h-1zM274 343h1v1h-1zM274 404h1v1h-1zM274 519h1v1h-1zM274 580h1v1h-1zM275 167h1v1h-1zM275 168h1v1h-1zM275 227h1v1h-1zM275 343h1v1h-1zM275 403h1v1h-1zM275 519h1v1h-1zM275 579h1v1h-1zM276 167h1v1h-1zM276 168h1v1h-1zM276 226h1v1h-1zM276 343h1v1h-1zM276 402h1v1h-1zM276 519h1v1h-1zM276 578h1v1h-1zM277 167h1v1h-1zM277 168h1v1h-1zM277 225h1v1h-1zM277 343h1v1h-1zM277 401h1v1h-1zM277 519h1v1h-1zM277 577h1v1h-1zM278 167h1v1h-1zM278 168h1v1h-1zM278 224h1v1h-1zM278 343h1v1h-1zM278 400h1v1h-1zM278 519h1v1h-1zM278 576h1v1h-1zM279 167h1v1h-1zM279 168h1v1h-1zM279 223h1v1h-1zM279 343h1v1h-1zM279 399h1v1h-1zM279 519h1v1h-1zM279 575h1v1h-1zM280 167h1v1h-1zM280 168h1v1h-1zM280 222h1v1h-1zM280 343h1v1h-1zM280 398h1v1h-1zM280 519h1v1h-1zM280 574h1v1h-1zM281 167h1v1h-1zM281 168h1v1h-1zM281 221h1v1h-1zM281 343h1v1h-1zM281 397h1v1h-1zM281 519h1v1h-1zM281 573h1v1h-1zM282 167h1v1h-1zM282 168h1v1h-1zM282 220h1v1h-1zM282 343h1v1h-1zM282 396h1v1h-1zM282 519h1v1h-1zM282 572h1v1h-1zM283 167h1v1h-1zM283 168h1v1h-1zM283 219h1v1h-1zM283 343h1v1h-1zM283 395h1v1h-1zM283 519h1v1h-1zM283 571h1v1h-1zM284 167h1v1h-1zM284 168h1v1h-1zM284 218h1v1h-1zM284 343h1v1h-1zM284 394h1v1h-1zM284 519h1v1h-1zM284 570h1v1h-1zM285 167h1v1h-1zM285 168h1v1h-1zM285 217h1v1h-1zM285 343h1v1h-1zM285 393h1v1h-1zM285 519h1v1h-1zM285 569h1v1h-1zM286 167h1v1h-1zM286 168h1v1h-1zM286 216h1v1h-1zM286 343h1v1h-1zM286 392h1v1h-1zM286 519h1v1h-1zM286 568h1v1h-1zM287 167h1v1h-1zM287 168h1v1h-1zM287 215h1v1h-1zM287 343h1v1h-1zM287 391h1v1h-1zM287 519h1v1h-1zM287 567h1v1h-1zM288 167h1v1h-1zM288 168h1v1h-1zM288 214h1v1h-1zM288 343h1v1h-1zM288 390h1v1h-1zM288 519h1v1h-1zM288 566h1v1h-1zM289 167h1v1h-1zM289 168h1v1h-1zM289 213h1v1h-1zM289 343h1v1h-1zM289 389h1v1h-1zM289 519h1v1h-1zM289 565h1v1h-1zM290 167h1v1h-1zM290 168h1v1h-1zM290 212h1v1h-1zM290 343h1v1h-1zM290 388h1v1h-1zM290 519h1v1h-1zM290 564h1v1h-1zM291 167h1v1h-1zM291 168h1v1h-1zM291 211h1v1h-1zM291 343h1v1h-1zM291 387h1v1h-1zM291 519h1v1h-1zM291 563h1v1h-1zM292 167h1v1h-1zM292 168h1v1h-1zM292 210h1v1h-1zM292 343h1v1h-1zM292 386h1v1h-1zM292 519h1v1h-1zM292 562h1v1h-1zM293 167h1v1h-1zM293 168h1v1h-1zM293 209h1v1h-1zM293 343h1v1h-1zM293 385h1v1h-1zM293 519h1v1h-1zM293 561h1v1h-1zM294 167h1v1h-1zM294 168h1v1h-1zM294 208h1v1h-1zM294 343h1v1h-1zM294 384h1v1h-1zM294 519h1v1h-1zM294 560h1v1h-1zM295 167h1v1h-1zM295 168h1v1h-1zM295 207h1v1h-1zM295 343h1v1h-1zM295 383h1v1h-1zM295 519h1v1h-1zM295 559h1v1h-1zM296 167h1v1h-1zM296 168h1v1h-1zM296 206h1v1h-1zM296 343h1v1h-1zM296 382h1v1h-1zM296 519h1v1h-1zM296 558h1v1h-1zM297 167h1v1h-1zM297 168h1v1h-1zM297 205h1v1h-1zM297 343h1v1h-1zM297 381h1v1h-1zM297 519h1v1h-1zM297 557h1v1h-1zM298 167h1v1h-1zM298 168h1v1h-1zM298 204h1v1h-1zM298 343h1v1h-1zM298 380h1v1h-1zM298 519h1v1h-1zM298 556h1v1h-1zM299 167h1v1h-1zM299 168h1v1h-1zM299 203h1v1h-1zM299 343h1v1h-1zM299 379h1v1h-1zM299 519h1v1h-1zM299 555h1v1h-1zM300 167h1v1h-1zM300 168h1v1h-1zM300 202h1v1h-1zM300 343h1v1h-1zM300 378h1v1h-1zM300 519h1v1h-1zM300 554h1v1h-1zM301 167h1v1h-1zM301 168h1v1h-1zM301 201h1v1h-1zM301 343h1v1h-1zM301 377h1v1h-1zM301 519h1v1h-1zM301 553h1v1h-1zM302 167h1v1h-1zM302 168h1v1h-1zM302 200h1v1h-1zM302 343h1v1h-1zM302 376h1v1h-1zM302 519h1v1h-1zM302 552h1v1h-1zM303 167h1v1h-1zM303 168h1v1h-1zM303 199h1v1h-1zM303 343h1v1h-1zM303 375h1v1h-1zM303 519h1v1h-1zM303 551h1v1h-1zM304 167h1v1h-1zM304 168h1v1h-1zM304 198h1v1h-1zM304 343h1v1h-1zM304 374h1v1h-1zM304 519h1v1h-1zM304 550h1v1h-1zM305 167h1v1h-1zM305 168h1v1h-1zM305 197h1v1h-1zM305 343h1v1h-1zM305 373h1v1h-1zM305 519h1v1h-1zM305 549h1v1h-1zM306 167h1v1h-1zM306 168h1v1h-1zM306 196h1v1h-1zM306 343h1v1h-1zM306 372h1v1h-1zM306 519h1v1h-1zM306 548h1v1h-1zM307 167h1v1h-1zM307 168h1v1h-1zM307 195h1v1h-1zM307 343h1v1h-1zM307 371h1v1h-1zM307 519h1v1h-1zM307 547h1v1h-1zM308 167h1v1h-1zM308 168h1v1h-1zM308 194h1v1h-1zM308 343h1v1h-1zM308 370h1v1h-1zM308 519h1v1h-1zM308 546h1v1h-1zM309 167h1v1h-1zM309 168h1v1h-1zM309 193h1v1h-1zM309 343h1v1h-1zM309 369h1v1h-1zM309 519h1v1h-1zM309 545h1v1h-1zM310 167h1v1h-1zM310 168h1v1h-1zM310 192h1v1h-1zM310 343h1v1h-1zM310 368h1v1h-1zM310 519h1v1h-1zM310 544h1v1h-1zM311 167h1v1h-1zM311 168h1v1h-1zM311 191h1v1h-1zM311 343h1v1h-1zM311 367h1v1h-1zM311 519h1v1h-1zM311 543h1v1h-1zM312 167h1v1h-1zM312 168h1v1h-1zM312 190h1v1h-1zM312 343h1v1h-1zM312 366h1v1h-1zM312 519h1v1h-1zM312 542h1v1h-1zM313 167h1v1h-1zM313 168h1v1h-1zM313 189h1v1h-1zM313 343h1v1h-1zM313 365h1v1h-1zM313 519h1v1h-1zM313 541h1v1h-1zM314 167h1v1h-1zM314 168h1v1h-1zM314 188h1v1h-1zM314 343h1v1h-1zM314 364h1v1h-1zM314 519h1v1h-1zM314 540h1v1h-1zM315 167h1v1h-1zM315 168h1v1h-1zM315 187h1v1h-1zM315 343h1v1h-1zM315 363h1v1h-1zM315 519h1v1h-1zM315 539h1v1h-1zM316 167h1v1h-1zM316 168h1v1h-1zM316 186h1v1h-1zM316 343h1v1h-1zM316 362h1v1h-1zM316 519h1v1h-1zM316 538h1v1h-1zM317 167h1v1h-1zM317 168h1v1h-1zM317 185h1v1h-1zM317 343h1v1h-1zM317 361h1v1h-1zM317 519h1v1h-1zM317 537h1v1h-1zM318 167h1v1h-1zM318 168h1v1h-1zM318 184h1v1h-1zM318 343h1v1h-1zM318 360h1v1h-1zM318 519h1v1h-1zM318 536h1v1h-1zM319 167h1v1h-1zM319 168h1v1h-1zM319 183h1v1h-1zM319 343h1v1h-1zM319 359h1v1h-1zM319 519h1v1h-1zM319 535h1v1h-1zM320 167h1v1h-1zM320 168h1v1h-1zM320 182h1v1h-1zM320 343h1v1h-1zM320 358h1v1h-1zM320 519h1v1h-1zM320 534h1v1h-1zM321 167h1v1h-1zM321 168h1v1h-1zM321 181h1v1h-1zM321 343h1v1h-1zM321 357h1v1h-1zM321 519h1v1h-1zM321 533h1v1h-1zM322 167h1v1h-1zM322 168h1v1h-1zM322 180h1v1h-1zM322 343h1v1h-1zM322 356h1v1h-1zM322 519h1v1h-1zM322 532h1v1h-1zM323 167h1v1h-1zM323 168h1v1h-1zM323 179h1v1h-1zM323 343h1v1h-1zM323 355h1v1h-1zM323 519h1v1h-1zM323 531h1v1h-1zM324 167h1v1h-1zM324 168h1v1h-1zM324 178h1v1h-1zM324 343h1v1h-1zM324 354h1v1h-1zM324 519h1v1h-1zM324 530h1v1h-1zM325 167h1v1h-1zM325 168h1v1h-1zM325 177h1v1h-1zM325 343h1v1h-1zM325 353h1v1h-1zM325 519h1v1h-1zM325 529h1v1h-1zM326 167h1v1h-1zM326 168h1v1h-1zM326 176h1v1h-1zM326 343h1v1h-1zM326 352h1v1h-1zM326 519h1v1h-1zM326 528h1v1h-1zM327 167h1v1h-1zM327 168h1v1h-1zM327 175h1v1h-1zM327 343h1v1h-1zM327 351h1v1h-1zM327 519h1v1h-1zM327 527h1v1h-1zM328 167h1v1h-1zM328 168h1v1h-1zM328 174h1v1h-1zM328 343h1v1h-1zM328 350h1v1h-1zM328 519h1v1h-1zM328 526h1v1h-1zM329 167h1v1h-1zM329 168h1v1h-1zM329 173h1v1h-1zM329 343h1v1h-1zM329 349h1v1h-1zM329 519h1v1h-1zM329 525h1v1h-1zM330 167h1v1h-1zM330 168h1v1h-1zM330 172h1v1h-1zM330 343h1v1h-1zM330 348h1v1h-1zM330 519h1v1h-1zM330 524h1v1h-1zM331 167h1v1h-1zM331 168h1v1h-1zM331 171h1v1h-1zM331 343h1v1h-1zM331 347h1v1h-1zM331 519h1v1h-1zM331 523h1v1h-1zM332 167h1v1h-1zM332 168h1v1h-1zM332 170h1v1h-1zM332 343h1v1h-1zM332 346h1v1h-1zM332 519h1v1h-1zM332 522h1v1h-1zM333 167h1v1h-1zM333 168h1v1h-1zM333 169h1v1h-1zM333 343h1v1h-1zM333 345h1v1h-1zM333 519h1v1h-1zM333 521h1v1h-1zM334 167h1v1h-1zM334 168h1v1h-1zM334 343h1v1h-1zM334 344h1v1h-1zM334 519h1v1h-1zM334 520h1v1h-1zM481 167h1v1h-1zM481 168h1v1h-1zM481 343h1v1h-1zM481 344h1v1h-1zM481 519h1v1h-1zM482 167h1v1h-1zM482 168h1v1h-1zM482 169h1v1h-1zM482 343h1v1h-1zM482 345h1v1h-1zM482 519h1v1h-1zM482 520h1v1h-1zM483 167h1v1h-1zM483 168h1v1h-1zM483 170h1v1h-1zM483 343h1v1h-1zM483 346h1v1h-1zM483 519h1v1h-1zM483 521h1v1h-1zM484 167h1v1h-1zM484 168h1v1h-1zM484 171h1v1h-1zM484 343h1v1h-1zM484 347h1v1h-1zM484 519h1v1h-1zM484 522h1v1h-1zM485 167h1v1h-1zM485 168h1v1h-1zM485 172h1v1h-1zM485 343h1v1h-1zM485 348h1v1h-1zM485 519h1v1h-1zM485 523h1v1h-1zM486 167h1v1h-1zM486 168h1v1h-1zM486 173h1v1h-1zM486 343h1v1h-1zM486 349h1v1h-1zM486 519h1v1h-1zM486 524h1v1h-1zM487 167h1v1h-1zM487 168h1v1h-1zM487 174h1v1h-1zM487 343h1v1h-1zM487 350h1v1h-1zM487 519h1v1h-1zM487 525h1v1h-1zM488 167h1v1h-1zM488 168h1v1h-1zM488 175h1v1h-1zM488 343h1v1h-1zM488 351h1v1h-1zM488 519h1v1h-1zM488 526h1v1h-1zM489 167h1v1h-1zM489 168h1v1h-1zM489 176h1v1h-1zM489 343h1v1h-1zM489 352h1v1h-1zM489 519h1v1h-1zM489 527h1v1h-1zM490 167h1v1h-1zM490 168h1v1h-1zM490 177h1v1h-1zM490 343h1v1h-1zM490 353h1v1h-1zM490 519h1v1h-1zM490 528h1v1h-1zM491 167h1v1h-1zM491 168h1v1h-1zM491 178h1v1h-1zM491 343h1v1h-1zM491 354h1v1h-1zM491 519h1v1h-1zM491 529h1v1h-1zM492 167h1v1h-1zM492 168h1v1h-1zM492 179h1v1h-1zM492 343h1v1h-1zM492 355h1v1h-1zM492 519h1v1h-1zM492 530h1v1h-1zM493 167h1v1h-1zM493 168h1v1h-1zM493 180h1v1h-1zM493 343h1v1h-1zM493 356h1v1h-1zM493 519h1v1h-1zM493 531h1v1h-1zM494 167h1v1h-1zM494 168h1v1h-1zM494 181h1v1h-1zM494 343h1v1h-1zM494 357h1v1h-1zM494 519h1v1h-1zM494 532h1v1h-1zM495 167h1v1h-1zM495 168h1v1h-1zM495 182h1v1h-1zM495 343h1v1h-1zM495 358h1v1h-1zM495 519h1v1h-1zM495 533h1v1h-1zM496 167h1v1h-1zM496 168h1v1h-1zM496 183h1v1h-1zM496 343h1v1h-1zM496 359h1v1h-1zM496 519h1v1h-1zM496 534h1v1h-1zM497 167h1v1h-1zM497 168h1v1h-1zM497 184h1v1h-1zM497 343h1v1h-1zM497 360h1v1h-1zM497 519h1v1h-1zM497 535h1v1h-1zM498 167h1v1h-1zM498 168h1v1h-1zM498 185h1v1h-1zM498 343h1v1h-1zM498 361h1v1h-1zM498 519h1v1h-1zM498 536h1v1h-1zM499 167h1v1h-1zM499 168h1v1h-1zM499 175h1v1h-1zM499 186h1v1h-1zM499 343h1v1h-1zM499 351h1v1h-1zM499 362h1v1h-1zM499 519h1v1h-1zM499 527h1v1h-1zM499 537h1v1h-1zM500 167h1v1h-1zM500 168h1v1h-1zM500 175h1v1h-1zM500 176h1v1h-1zM500 187h1v1h-1zM500 343h1v1h-1zM500 351h1v1h-1zM500 352h1v1h-1zM500 363h1v1h-1zM500 519h1v1h-1zM500 527h1v1h-1zM500 538h1v1h-1zM501 167h1v1h-1zM501 168h1v1h-1zM501 175h1v1h-1zM501 177h1v1h-1zM501 188h1v1h-1zM501 343h1v1h-1zM501 351h1v1h-1zM501 353h1v1h-1zM501 364h1v1h-1zM501 519h1v1h-1zM501 527h1v1h-1zM501 528h1v1h-1zM501 539h1v1h-1zM502 167h1v1h-1zM502 168h1v1h-1zM502 175h1v1h-1zM502 178h1v1h-1zM502 189h1v1h-1zM502 343h1v1h-1zM502 351h1v1h-1zM502 354h1v1h-1zM502 365h1v1h-1zM502 519h1v1h-1zM502 527h1v1h-1zM502 529h1v1h-1zM502 540h1v1h-1zM503 167h1v1h-1zM503 168h1v1h-1zM503 175h1v1h-1zM503 179h1v1h-1zM503 190h1v1h-1zM503 343h1v1h-1zM503 351h1v1h-1zM503 355h1v1h-1zM503 366h1v1h-1zM503 519h1v1h-1zM503 527h1v1h-1zM503 530h1v1h-1zM503 541h1v1h-1zM504 167h1v1h-1zM504 168h1v1h-1zM504 175h1v1h-1zM504 180h1v1h-1zM504 191h1v1h-1zM504 343h1v1h-1zM504 351h1v1h-1zM504 356h1v1h-1zM504 367h1v1h-1zM504 519h1v1h-1zM504 527h1v1h-1zM504 531h1v1h-1zM504 542h1v1h-1zM505 167h1v1h-1zM505 168h1v1h-1zM505 175h1v1h-1zM505 181h1v1h-1zM505 192h1v1h-1zM505 343h1v1h-1zM505 351h1v1h-1zM505 357h1v1h-1zM505 368h1v1h-1zM505 519h1v1h-1zM505 527h1v1h-1zM505 532h1v1h-1zM505 543h1v1h-1zM506 167h1v1h-1zM506 168h1v1h-1zM506 175h1v1h-1zM506 182h1v1h-1zM506 193h1v1h-1zM506 343h1v1h-1zM506 351h1v1h-1zM506 358h1v1h-1zM506 369h1v1h-1zM506 519h1v1h-1zM506 527h1v1h-1zM506 533h1v1h-1zM506 544h1v1h-1zM507 167h1v1h-1zM507 168h1v1h-1zM507 175h1v1h-1zM507 183h1v1h-1zM507 194h1v1h-1zM507 343h1v1h-1zM507 351h1v1h-1zM507 359h1v1h-1zM507 370h1v1h-1zM507 519h1v1h-1zM507 527h1v1h-1zM507 534h1v1h-1zM507 545h1v1h-1zM508 167h1v1h-1zM508 168h1v1h-1zM508 175h1v1h-1zM508 184h1v1h-1zM508 195h1v1h-1zM508 343h1v1h-1zM508 351h1v1h-1zM508 360h1v1h-1zM508 371h1v1h-1zM508 519h1v1h-1zM508 527h1v1h-1zM508 535h1v1h-1zM508 546h1v1h-1zM509 167h1v1h-1zM509 168h1v1h-1zM509 175h1v1h-1zM509 185h1v1h-1zM509 196h1v1h-1zM509 343h1v1h-1zM509 351h1v1h-1zM509 361h1v1h-1zM509 372h1v1h-1zM509 519h1v1h-1zM509 527h1v1h-1zM509 536h1v1h-1zM509 547h1v1h-1zM510 167h1v1h-1zM510 168h1v1h-1zM510 175h1v1h-1zM510 186h1v1h-1zM510 197h1v1h-1zM510 343h1v1h-1zM510 351h1v1h-1zM510 362h1v1h-1zM510 373h1v1h-1zM510 519h1v1h-1zM510 527h1v1h-1zM510 537h1v1h-1zM510 548h1v1h-1zM511 167h1v1h-1zM511 168h1v1h-1zM511 175h1v1h-1zM511 187h1v1h-1zM511 198h1v1h-1zM511 343h1v1h-1zM511 351h1v1h-1zM511 363h1v1h-1zM511 374h1v1h-1zM511 519h1v1h-1zM511 527h1v1h-1zM511 538h1v1h-1zM511 549h1v1h-1zM512 167h1v1h-1zM512 168h1v1h-1zM512 175h1v1h-1zM512 188h1v1h-1zM512 199h1v1h-1zM512 343h1v1h-1zM512 351h1v1h-1zM512 364h1v1h-1zM512 375h1v1h-1zM512 519h1v1h-1zM512 527h1v1h-1zM512 539h1v1h-1zM512 550h1v1h-1zM513 167h1v1h-1zM513 168h1v1h-1zM513 175h1v1h-1zM513 189h1v1h-1zM513 200h1v1h-1zM513 343h1v1h-1zM513 351h1v1h-1zM513 365h1v1h-1zM513 376h1v1h-1zM513 519h1v1h-1zM513 527h1v1h-1zM513 540h1v1h-1zM513 551h1v1h-1zM514 167h1v1h-1zM514 168h1v1h-1zM514 175h1v1h-1zM514 190h1v1h-1zM514 201h1v1h-1zM514 343h1v1h-1zM514 351h1v1h-1zM514 366h1v1h-1zM514 377h1v1h-1zM514 519h1v1h-1zM514 527h1v1h-1zM514 541h1v1h-1zM514 552h1v1h-1zM515 167h1v1h-1zM515 168h1v1h-1zM515 175h1v1h-1zM515 191h1v1h-1zM515 202h1v1h-1zM515 343h1v1h-1zM515 351h1v1h-1zM515 367h1v1h-1zM515 378h1v1h-1zM515 519h1v1h-1zM515 527h1v1h-1zM515 542h1v1h-1zM515 553h1v1h-1zM516 167h1v1h-1zM516 168h1v1h-1zM516 175h1v1h-1zM516 192h1v1h-1zM516 203h1v1h-1zM516 343h1v1h-1zM516 351h1v1h-1zM516 368h1v1h-1zM516 379h1v1h-1zM516 519h1v1h-1zM516 527h1v1h-1zM516 543h1v1h-1zM516 554h1v1h-1zM517 167h1v1h-1zM517 168h1v1h-1zM517 175h1v1h-1zM517 193h1v1h-1zM517 204h1v1h-1zM517 343h1v1h-1zM517 351h1v1h-1zM517 369h1v1h-1zM517 380h1v1h-1zM517 519h1v1h-1zM517 527h1v1h-1zM517 544h1v1h-1zM517 555h1v1h-1zM518 167h1v1h-1zM518 168h1v1h-1zM518 175h1v1h-1zM518 194h1v1h-1zM518 205h1v1h-1zM518 343h1v1h-1zM518 351h1v1h-1zM518 370h1v1h-1zM518 381h1v1h-1zM518 519h1v1h-1zM518 527h1v1h-1zM518 545h1v1h-1zM518 556h1v1h-1zM519 167h1v1h-1zM519 168h1v1h-1zM519 175h1v1h-1zM519 195h1v1h-1zM519 206h1v1h-1zM519 343h1v1h-1zM519 351h1v1h-1zM519 371h1v1h-1zM519 382h1v1h-1zM519 519h1v1h-1zM519 527h1v1h-1zM519 546h1v1h-1zM519 557h1v1h-1zM520 167h1v1h-1zM520 168h1v1h-1zM520 175h1v1h-1zM520 196h1v1h-1zM520 207h1v1h-1zM520 343h1v1h-1zM520 351h1v1h-1zM520 372h1v1h-1zM520 383h1v1h-1zM520 519h1v1h-1zM520 527h1v1h-1zM520 547h1v1h-1zM520 558h1v1h-1zM521 167h1v1h-1zM521 168h1v1h-1zM521 175h1v1h-1zM521 197h1v1h-1zM521 208h1v1h-1zM521 343h1v1h-1zM521 351h1v1h-1zM521 373h1v1h-1zM521 384h1v1h-1zM521 519h1v1h-1zM521 527h1v1h-1zM521 548h1v1h-1zM521 559h1v1h-1zM522 167h1v1h-1zM522 168h1v1h-1zM522 175h1v1h-1zM522 198h1v1h-1zM522 209h1v1h-1zM522 343h1v1h-1zM522 351h1v1h-1zM522 374h1v1h-1zM522 385h1v1h-1zM522 519h1v1h-1zM522 527h1v1h-1zM522 549h1v1h-1zM522 560h1v1h-1zM523 167h1v1h-1zM523 168h1v1h-1zM523 175h1v1h-1zM523 199h1v1h-1zM523 210h1v1h-1zM523 343h1v1h-1zM523 351h1v1h-1zM523 375h1v1h-1zM523 386h1v1h-1zM523 519h1v1h-1zM523 527h1v1h-1zM523 550h1v1h-1zM523 561h1v1h-1zM524 167h1v1h-1zM524 168h1v1h-1zM524 175h1v1h-1zM524 200h1v1h-1zM524 211h1v1h-1zM524 343h1v1h-1zM524 351h1v1h-1zM524 376h1v1h-1zM524 387h1v1h-1zM524 519h1v1h-1zM524 527h1v1h-1zM524 551h1v1h-1zM524 562h1v1h-1zM525 167h1v1h-1zM525 168h1v1h-1zM525 175h1v1h-1zM525 201h1v1h-1zM525 212h1v1h-1zM525 343h1v1h-1zM525 351h1v1h-1zM525 377h1v1h-1zM525 388h1v1h-1zM525 519h1v1h-1zM525 527h1v1h-1zM525 552h1v1h-1zM525 563h1v1h-1zM526 167h1v1h-1zM526 168h1v1h-1zM526 175h1v1h-1zM526 202h1v1h-1zM526 213h1v1h-1zM526 343h1v1h-1zM526 351h1v1h-1zM526 378h1v1h-1zM526 389h1v1h-1zM526 519h1v1h-1zM526 527h1v1h-1zM526 553h1v1h-1zM526 564h1v1h-1zM527 167h1v1h-1zM527 168h1v1h-1zM527 175h1v1h-1zM527 203h1v1h-1zM527 214h1v1h-1zM527 343h1v1h-1zM527 351h1v1h-1zM527 379h1v1h-1zM527 390h1v1h-1zM527 519h1v1h-1zM527 527h1v1h-1zM527 554h1v1h-1zM527 555h1v1h-1zM527 565h1v1h-1zM528 167h1v1h-1zM528 168h1v1h-1zM528 175h1v1h-1zM528 204h1v1h-1zM528 215h1v1h-1zM528 343h1v1h-1zM528 351h1v1h-1zM528 380h1v1h-1zM528 391h1v1h-1zM528 519h1v1h-1zM528 527h1v1h-1zM528 556h1v1h-1zM528 566h1v1h-1zM529 167h1v1h-1zM529 168h1v1h-1zM529 175h1v1h-1zM529 205h1v1h-1zM529 216h1v1h-1zM529 343h1v1h-1zM529 351h1v1h-1zM529 381h1v1h-1zM529 392h1v1h-1zM529 519h1v1h-1zM529 527h1v1h-1zM529 557h1v1h-1zM529 567h1v1h-1zM530 167h1v1h-1zM530 168h1v1h-1zM530 175h1v1h-1zM530 206h1v1h-1zM530 217h1v1h-1zM530 343h1v1h-1zM530 351h1v1h-1zM530 382h1v1h-1zM530 393h1v1h-1zM530 519h1v1h-1zM530 527h1v1h-1zM530 558h1v1h-1zM530 568h1v1h-1zM531 167h1v1h-1zM531 168h1v1h-1zM531 175h1v1h-1zM531 207h1v1h-1zM531 218h1v1h-1zM531 343h1v1h-1zM531 351h1v1h-1zM531 383h1v1h-1zM531 394h1v1h-1zM531 519h1v1h-1zM531 527h1v1h-1zM531 559h1v1h-1zM531 569h1v1h-1zM532 167h1v1h-1zM532 168h1v1h-1zM532 175h1v1h-1zM532 208h1v1h-1zM532 219h1v1h-1zM532 343h1v1h-1zM532 351h1v1h-1zM532 384h1v1h-1zM532 395h1v1h-1zM532 519h1v1h-1zM532 527h1v1h-1zM532 560h1v1h-1zM532 570h1v1h-1zM533 167h1v1h-1zM533 168h1v1h-1zM533 175h1v1h-1zM533 209h1v1h-1zM533 220h1v1h-1zM533 343h1v1h-1zM533 351h1v1h-1zM533 385h1v1h-1zM533 396h1v1h-1zM533 519h1v1h-1zM533 527h1v1h-1zM533 561h1v1h-1zM533 571h1v1h-1zM534 167h1v1h-1zM534 168h1v1h-1zM534 175h1v1h-1zM534 210h1v1h-1zM534 221h1v1h-1zM534 343h1v1h-1zM534 351h1v1h-1zM534 386h1v1h-1zM534 397h1v1h-1zM534 519h1v1h-1zM534 527h1v1h-1zM534 562h1v1h-1zM534 572h1v1h-1zM535 167h1v1h-1zM535 168h1v1h-1zM535 175h1v1h-1zM535 211h1v1h-1zM535 222h1v1h-1zM535 343h1v1h-1zM535 351h1v1h-1zM535 387h1v1h-1zM535 398h1v1h-1zM535 519h1v1h-1zM535 527h1v1h-1zM535 563h1v1h-1zM535 573h1v1h-1zM536 167h1v1h-1zM536 168h1v1h-1zM536 175h1v1h-1zM536 212h1v1h-1zM536 223h1v1h-1zM536 343h1v1h-1zM536 351h1v1h-1zM536 388h1v1h-1zM536 399h1v1h-1zM536 519h1v1h-1zM536 527h1v1h-1zM536 564h1v1h-1zM536 574h1v1h-1zM537 167h1v1h-1zM537 168h1v1h-1zM537 175h1v1h-1zM537 213h1v1h-1zM537 224h1v1h-1zM537 343h1v1h-1zM537 351h1v1h-1zM537 389h1v1h-1zM537 400h1v1h-1zM537 519h1v1h-1zM537 527h1v1h-1zM537 565h1v1h-1zM537 575h1v1h-1zM538 167h1v1h-1zM538 168h1v1h-1zM538 175h1v1h-1zM538 214h1v1h-1zM538 225h1v1h-1zM538 343h1v1h-1zM538 351h1v1h-1zM538 390h1v1h-1zM538 401h1v1h-1zM538 519h1v1h-1zM538 527h1v1h-1zM538 566h1v1h-1zM538 576h1v1h-1zM539 167h1v1h-1zM539 168h1v1h-1zM539 175h1v1h-1zM539 215h1v1h-1zM539 226h1v1h-1zM539 343h1v1h-1zM539 351h1v1h-1zM539 391h1v1h-1zM539 402h1v1h-1zM539 519h1v1h-1zM539 527h1v1h-1zM539 567h1v1h-1zM539 577h1v1h-1zM540 167h1v1h-1zM540 168h1v1h-1zM540 175h1v1h-1zM540 216h1v1h-1zM540 227h1v1h-1zM540 343h1v1h-1zM540 351h1v1h-1zM540 392h1v1h-1zM540 403h1v1h-1zM540 519h1v1h-1zM540 527h1v1h-1zM540 568h1v1h-1zM540 578h1v1h-1zM541 167h1v1h-1zM541 168h1v1h-1zM541 175h1v1h-1zM541 217h1v1h-1zM541 228h1v1h-1zM541 343h1v1h-1zM541 351h1v1h-1zM541 393h1v1h-1zM541 404h1v1h-1zM541 519h1v1h-1zM541 527h1v1h-1zM541 569h1v1h-1zM541 579h1v1h-1zM542 167h1v1h-1zM542 168h1v1h-1zM542 175h1v1h-1zM542 218h1v1h-1zM542 229h1v1h-1zM542 343h1v1h-1zM542 351h1v1h-1zM542 394h1v1h-1zM542 405h1v1h-1zM542 519h1v1h-1zM542 527h1v1h-1zM542 570h1v1h-1zM542 580h1v1h-1zM543 167h1v1h-1zM543 168h1v1h-1zM543 175h1v1h-1zM543 219h1v1h-1zM543 230h1v1h-1zM543 343h1v1h-1zM543 351h1v1h-1zM543 395h1v1h-1zM543 406h1v1h-1zM543 519h1v1h-1zM543 527h1v1h-1zM543 571h1v1h-1zM543 581h1v1h-1zM544 167h1v1h-1zM544 168h1v1h-1zM544 175h1v1h-1zM544 220h1v1h-1zM544 231h1v1h-1zM544 343h1v1h-1zM544 351h1v1h-1zM544 396h1v1h-1zM544 407h1v1h-1zM544 519h1v1h-1zM544 527h1v1h-1zM544 572h1v1h-1zM544 582h1v1h-1zM545 167h1v1h-1zM545 168h1v1h-1zM545 175h1v1h-1zM545 221h1v1h-1zM545 232h1v1h-1zM545 343h1v1h-1zM545 351h1v1h-1zM545 397h1v1h-1zM545 408h1v1h-1zM545 519h1v1h-1zM545 527h1v1h-1zM545 573h1v1h-1zM545 583h1v1h-1zM546 167h1v1h-1zM546 168h1v1h-1zM546 175h1v1h-1zM546 222h1v1h-1zM546 233h1v1h-1zM546 343h1v1h-1zM546 351h1v1h-1zM546 398h1v1h-1zM546 409h1v1h-1zM546 519h1v1h-1zM546 527h1v1h-1zM546 574h1v1h-1zM546 584h1v1h-1zM547 167h1v1h-1zM547 168h1v1h-1zM547 175h1v1h-1zM547 223h1v1h-1zM547 234h1v1h-1zM547 343h1v1h-1zM547 351h1v1h-1zM547 399h1v1h-1zM547 410h1v1h-1zM547 519h1v1h-1zM547 527h1v1h-1zM547 575h1v1h-1zM547 585h1v1h-1zM548 167h1v1h-1zM548 168h1v1h-1zM548 175h1v1h-1zM548 224h1v1h-1zM548 235h1v1h-1zM548 343h1v1h-1zM548 351h1v1h-1zM548 400h1v1h-1zM548 411h1v1h-1zM548 519h1v1h-1zM548 527h1v1h-1zM548 576h1v1h-1zM548 586h1v1h-1zM549 167h1v1h-1zM549 168h1v1h-1zM549 175h1v1h-1zM549 225h1v1h-1zM549 236h1v1h-1zM549 343h1v1h-1zM549 351h1v1h-1zM549 401h1v1h-1zM549 412h1v1h-1zM549 519h1v1h-1zM549 527h1v1h-1zM549 577h1v1h-1zM549 587h1v1h-1zM550 167h1v1h-1zM550 168h1v1h-1zM550 175h1v1h-1zM550 226h1v1h-1zM550 237h1v1h-1zM550 343h1v1h-1zM550 351h1v1h-1zM550 402h1v1h-1zM550 413h1v1h-1zM550 519h1v1h-1zM550 527h1v1h-1zM550 578h1v1h-1zM550 588h1v1h-1zM551 167h1v1h-1zM551 168h1v1h-1zM551 175h1v1h-1zM551 227h1v1h-1zM551 238h1v1h-1zM551 343h1v1h-1zM551 351h1v1h-1zM551 403h1v1h-1zM551 414h1v1h-1zM551 519h1v1h-1zM551 527h1v1h-1zM551 579h1v1h-1zM551 589h1v1h-1zM552 167h1v1h-1zM552 168h1v1h-1zM552 175h1v1h-1zM552 228h1v1h-1zM552 239h1v1h-1zM552 343h1v1h-1zM552 351h1v1h-1zM552 404h1v1h-1zM552 415h1v1h-1zM552 519h1v1h-1zM552 527h1v1h-1zM552 580h1v1h-1zM552 590h1v1h-1zM553 167h1v1h-1zM553 168h1v1h-1zM553 175h1v1h-1zM553 229h1v1h-1zM553 240h1v1h-1zM553 343h1v1h-1zM553 351h1v1h-1zM553 405h1v1h-1zM553 416h1v1h-1zM553 519h1v1h-1zM553 527h1v1h-1zM553 581h1v1h-1zM553 591h1v1h-1zM554 167h1v1h-1zM554 168h1v1h-1zM554 175h1v1h-1zM554 176h1v1h-1zM554 177h1v1h-1zM554 178h1v1h-1zM554 179h1v1h-1zM554 180h1v1h-1zM554 181h1v1h-1zM554 182h1v1h-1zM554 183h1v1h-1zM554 184h1v1h-1zM554 185h1v1h-1zM554 186h1v1h-1zM554 187h1v1h-1zM554 188h1v1h-1zM554 189h1v1h-1zM554 190h1v1h-1zM554 191h1v1h-1zM554 192h1v1h-1zM554 193h1v1h-1zM554 194h1v1h-1zM554 195h1v1h-1zM554 196h1v1h-1zM554 197h1v1h-1zM554 198h1v1h-1zM554 199h1v1h-1zM554 200h1v1h-1zM554 201h1v1h-1zM554 202h1v1h-1zM554 203h1v1h-1zM554 204h1v1h-1zM554 205h1v1h-1zM554 206h1v1h-1zM554 207h1v1h-1zM554 208h1v1h-1zM554 209h1v1h-1zM554 210h1v1h-1zM554 211h1v1h-1zM554 212h1v1h-1zM554 213h1v1h-1zM554 214h1v1h-1zM554 215h1v1h-1zM554 216h1v1h-1zM554 217h1v1h-1zM554 218h1v1h-1zM554 219h1v1h-1zM554 220h1v1h-1zM554 221h1v1h-1zM554 222h1v1h-1zM554 223h1v1h-1zM554 224h1v1h-1zM554 225h1v1h-1zM554 226h1v1h-1zM554 227h1v1h-1zM554 228h1v1h-1zM554 229h1v1h-1zM554 230h1v1h-1zM554 241h1v1h-1zM554 343h1v1h-1zM554 351h1v1h-1zM554 352h1v1h-1zM554 353h1v1h-1zM554 354h1v1h-1zM554 355h1v1h-1zM554 356h1v1h-1zM554 357h1v1h-1zM554 358h1v1h-1zM554 359h1v1h-1zM554 360h1v1h-1zM554 361h1v1h-1zM554 362h1v1h-1zM554 363h1v1h-1zM554 364h1v1h-1zM554 365h1v1h-1zM554 366h1v1h-1zM554 367h1v1h-1zM554 368h1v1h-1zM554 369h1v1h-1zM554 370h1v1h-1zM554 371h1v1h-1zM554 372h1v1h-1zM554 373h1v1h-1zM554 374h1v1h-1zM554 375h1v1h-1zM554 376h1v1h-1zM554 377h1v1h-1zM554 378h1v1h-1zM554 379h1v1h-1zM554 380h1v1h-1zM554 381h1v1h-1zM554 382h1v1h-1zM554 383h1v1h-1zM554 384h1v1h-1zM554 385h1v1h-1zM554 386h1v1h-1zM554 387h1v1h-1zM554 388h1v1h-1zM554 389h1v1h-1zM554 390h1v1h-1zM554 391h1v1h-1zM554 392h1v1h-1zM554 393h1v1h-1zM554 394h1v1h-1zM554 395h1v1h-1zM554 396h1v1h-1zM554 397h1v1h-1zM554 398h1v1h-1zM554 399h1v1h-1zM554 400h1v1h-1zM554 401h1v1h-1zM554 402h1v1h-1zM554 403h1v1h-1zM554 404h1v1h-1zM554 405h1v1h-1zM554 406h1v1h-1zM554 417h1v1h-1zM554 519h1v1h-1zM554 527h1v1h-1zM554 528h1v1h-1zM554 529h1v1h-1zM554 530h1v1h-1zM554 531h1v1h-1zM554 532h1v1h-1zM554 533h1v1h-1zM554 534h1v1h-1zM554 535h1v1h-1zM554 536h1v1h-1zM554 537h1v1h-1zM554 538h1v1h-1zM554 539h1v1h-1zM554 540h1v1h-1zM554 541h1v1h-1zM554 542h1v1h-1zM554 543h1v1h-1zM554 544h1v1h-1zM554 545h1v1h-1zM554 546h1v1h-1zM554 547h1v1h-1zM554 548h1v1h-1zM554 549h1v1h-1zM554 550h1v1h-1zM554 551h1v1h-1zM554 552h1v1h-1zM554 553h1v1h-1zM554 554h1v1h-1zM554 555h1v1h-1zM554 556h1v1h-1zM554 557h1v1h-1zM554 558h1v1h-1zM554 559h1v1h-1zM554 560h1v1h-1zM554 561h1v1h-1zM554 562h1v1h-1zM554 563h1v1h-1zM554 564h1v1h-1zM554 565h1v1h-1zM554 566h1v1h-1zM554 567h1v1h-1zM554 568h1v1h-1zM554 569h1v1h-1zM554 570h1v1h-1zM554 571h1v1h-1zM554 572h1v1h-1zM554 573h1v1h-1zM554 574h1v1h-1zM554 575h1v1h-1zM554 576h1v1h-1zM554 577h1v1h-1zM554 578h1v1h-1zM554 579h1v1h-1zM554 580h1v1h-1zM554 581h1v1h-1zM554 582h1v1h-1zM554 592h1v1h-1zM555 167h1v1h-1zM555 168h1v1h-1zM555 240h1v1h-1zM555 343h1v1h-1zM555 416h1v1h-1zM555 519h1v1h-1zM555 592h1v1h-1zM556 167h1v1h-1zM556 168h1v1h-1zM556 239h1v1h-1zM556 343h1v1h-1zM556 415h1v1h-1zM556 519h1v1h-1zM556 591h1v1h-1zM557 167h1v1h-1zM557 168h1v1h-1zM557 238h1v1h-1zM557 343h1v1h-1zM557 414h1v1h-1zM557 519h1v1h-1zM557 590h1v1h-1zM558 167h1v1h-1zM558 168h1v1h-1zM558 237h1v1h-1zM558 343h1v1h-1zM558 413h1v1h-1zM558 519h1v1h-1zM558 589h1v1h-1zM559 167h1v1h-1zM559 168h1v1h-1zM559 236h1v1h-1zM559 343h1v1h-1zM559 412h1v1h-1zM559 519h1v1h-1zM559 588h1v1h-1zM560 167h1v1h-1zM560 168h1v1h-1zM560 235h1v1h-1zM560 343h1v1h-1zM560 411h1v1h-1zM560 519h1v1h-1zM560 587h1v1h-1zM561 167h1v1h-1zM561 168h1v1h-1zM561 234h1v1h-1zM561 343h1v1h-1zM561 410h1v1h-1zM561 519h1v1h-1zM561 586h1v1h-1zM562 167h1v1h-1zM562 168h1v1h-1zM562 233h1v1h-1zM562 343h1v1h-1zM562 409h1v1h-1zM562 519h1v1h-1zM562 585h1v1h-1zM563 167h1v1h-1zM563 168h1v1h-1zM563 232h1v1h-1zM563 343h1v1h-1zM563 408h1v1h-1zM563 519h1v1h-1zM563 584h1v1h-1zM564 167h1v1h-1zM564 168h1v1h-1zM564 231h1v1h-1zM564 343h1v1h-1zM564 407h1v1h-1zM564 519h1v1h-1zM564 583h1v1h-1zM565 167h1v1h-1zM565 168h1v1h-1zM565 230h1v1h-1zM565 343h1v1h-1zM565 406h1v1h-1zM565 519h1v1h-1zM565 582h1v1h-1zM566 167h1v1h-1zM566 168h1v1h-1zM566 229h1v1h-1zM566 343h1v1h-1zM566 405h1v1h-1zM566 519h1v1h-1zM566 581h1v1h-1zM567 167h1v1h-1zM567 168h1v1h-1zM567 228h1v1h-1zM567 343h1v1h-1zM567 404h1v1h-1zM567 519h1v1h-1zM567 580h1v1h-1zM568 167h1v1h-1zM568 168h1v1h-1zM568 227h1v1h-1zM568 343h1v1h-1zM568 403h1v1h-1zM568 519h1v1h-1zM568 579h1v1h-1zM569 167h1v1h-1zM569 168h1v1h-1zM569 226h1v1h-1zM569 343h1v1h-1zM569 402h1v1h-1zM569 519h1v1h-1zM569 578h1v1h-1zM570 167h1v1h-1zM570 168h1v1h-1zM570 225h1v1h-1zM570 343h1v1h-1zM570 401h1v1h-1zM570 519h1v1h-1zM570 577h1v1h-1zM571 167h1v1h-1zM571 168h1v1h-1zM571 224h1v1h-1zM571 343h1v1h-1zM571 400h1v1h-1zM571 519h1v1h-1zM571 576h1v1h-1zM572 167h1v1h-1zM572 168h1v1h-1zM572 223h1v1h-1zM572 343h1v1h-1zM572 399h1v1h-1zM572 519h1v1h-1zM572 575h1v1h-1zM573 167h1v1h-1zM573 168h1v1h-1zM573 222h1v1h-1zM573 343h1v1h-1zM573 398h1v1h-1zM573 519h1v1h-1zM573 574h1v1h-1zM574 167h1v1h-1zM574 168h1v1h-1zM574 221h1v1h-1zM574 343h1v1h-1zM574 397h1v1h-1zM574 519h1v1h-1zM574 573h1v1h-1zM575 167h1v1h-1zM575 168h1v1h-1zM575 220h1v1h-1zM575 343h1v1h-1zM575 396h1v1h-1zM575 519h1v1h-1zM575 572h1v1h-1zM576 167h1v1h-1zM576 168h1v1h-1zM576 219h1v1h-1zM576 343h1v1h-1zM576 395h1v1h-1zM576 519h1v1h-1zM576 571h1v1h-1zM577 167h1v1h-1zM577 168h1v1h-1zM577 218h1v1h-1zM577 343h1v1h-1zM577 394h1v1h-1zM577 519h1v1h-1zM577 570h1v1h-1zM578 167h1v1h-1zM578 168h1v1h-1zM578 217h1v1h-1zM578 343h1v1h-1zM578 393h1v1h-1zM578 519h1v1h-1zM578 569h1v1h-1zM579 167h1v1h-1zM579 168h1v1h-1zM579 216h1v1h-1zM579 343h1v1h-1zM579 392h1v1h-1zM579 519h1v1h-1zM579 568h1v1h-1zM580 167h1v1h-1zM580 168h1v1h-1zM580 215h1v1h-1zM580 343h1v1h-1zM580 391h1v1h-1zM580 519h1v1h-1zM580 567h1v1h-1zM581 167h1v1h-1zM581 168h1v1h-1zM581 214h1v1h-1zM581 343h1v1h-1zM581 390h1v1h-1zM581 519h1v1h-1zM581 566h1v1h-1zM582 167h1v1h-1zM582 168h1v1h-1zM582 213h1v1h-1zM582 343h1v1h-1zM582 389h1v1h-1zM582 519h1v1h-1zM582 565h1v1h-1zM583 167h1v1h-1zM583 168h1v1h-1zM583 212h1v1h-1zM583 343h1v1h-1zM583 388h1v1h-1zM583 519h1v1h-1zM583 564h1v1h-1zM584 167h1v1h-1zM584 168h1v1h-1zM584 211h1v1h-1zM584 343h1v1h-1zM584 387h1v1h-1zM584 519h1v1h-1zM584 563h1v1h-1zM585 167h1v1h-1zM585 168h1v1h-1zM585 210h1v1h-1zM585 343h1v1h-1zM585 386h1v1h-1zM585 519h1v1h-1zM585 562h1v1h-1zM586 167h1v1h-1zM586 168h1v1h-1zM586 209h1v1h-1zM586 343h1v1h-1zM586 385h1v1h-1zM586 519h1v1h-1zM586 561h1v1h-1zM587 167h1v1h-1zM587 168h1v1h-1zM587 208h1v1h-1zM587 343h1v1h-1zM587 384h1v1h-1zM587 519h1v1h-1zM587 560h1v1h-1zM588 167h1v1h-1zM588 168h1v1h-1zM588 207h1v1h-1zM588 343h1v1h-1zM588 383h1v1h-1zM588 519h1v1h-1zM588 559h1v1h-1zM589 167h1v1h-1zM589 168h1v1h-1zM589 206h1v1h-1zM589 343h1v1h-1zM589 382h1v1h-1zM589 519h1v1h-1zM589 558h1v1h-1zM590 167h1v1h-1zM590 168h1v1h-1zM590 205h1v1h-1zM590 343h1v1h-1zM590 381h1v1h-1zM590 519h1v1h-1zM590 557h1v1h-1zM591 167h1v1h-1zM591 168h1v1h-1zM591 204h1v1h-1zM591 343h1v1h-1zM591 380h1v1h-1zM591 519h1v1h-1zM591 556h1v1h-1zM592 167h1v1h-1zM592 168h1v1h-1zM592 203h1v1h-1zM592 343h1v1h-1zM592 379h1v1h-1zM592 519h1v1h-1zM592 555h1v1h-1zM593 167h1v1h-1zM593 168h1v1h-1zM593 202h1v1h-1zM593 343h1v1h-1zM593 378h1v1h-1zM593 519h1v1h-1zM593 554h1v1h-1zM594 167h1v1h-1zM594 168h1v1h-1zM594 201h1v1h-1zM594 343h1v1h-1zM594 377h1v1h-1zM594 519h1v1h-1zM594 553h1v1h-1zM595 167h1v1h-1zM595 168h1v1h-1zM595 200h1v1h-1zM595 343h1v1h-1zM595 376h1v1h-1zM595 519h1v1h-1zM595 552h1v1h-1zM596 167h1v1h-1zM596 168h1v1h-1zM596 199h1v1h-1zM596 343h1v1h-1zM596 375h1v1h-1zM596 519h1v1h-1zM596 551h1v1h-1zM597 167h1v1h-1zM597 168h1v1h-1zM597 198h1v1h-1zM597 343h1v1h-1zM597 374h1v1h-1zM597 519h1v1h-1zM597 550h1v1h-1zM598 167h1v1h-1zM598 168h1v1h-1zM598 197h1v1h-1zM598 343h1v1h-1zM598 373h1v1h-1zM598 519h1v1h-1zM598 549h1v1h-1zM599 167h1v1h-1zM599 168h1v1h-1zM599 196h1v1h-1zM599 343h1v1h-1zM599 372h1v1h-1zM599 519h1v1h-1zM599 548h1v1h-1zM600 167h1v1h-1zM600 168h1v1h-1zM600 195h1v1h-1zM600 343h1v1h-1zM600 371h1v1h-1zM600 519h1v1h-1zM600 547h1v1h-1zM601 167h1v1h-1zM601 168h1v1h-1zM601 194h1v1h-1zM601 343h1v1h-1zM601 370h1v1h-1zM601 519h1v1h-1zM601 546h1v1h-1zM602 167h1v1h-1zM602 168h1v1h-1zM602 193h1v1h-1zM602 343h1v1h-1zM602 369h1v1h-1zM602 519h1v1h-1zM602 545h1v1h-1zM603 167h1v1h-1zM603 168h1v1h-1zM603 192h1v1h-1zM603 343h1v1h-1zM603 368h1v1h-1zM603 519h1v1h-1zM603 544h1v1h-1zM604 167h1v1h-1zM604 168h1v1h-1zM604 191h1v1h-1zM604 343h1v1h-1zM604 367h1v1h-1zM604 519h1v1h-1zM604 543h1v1h-1zM605 167h1v1h-1zM605 168h1v1h-1zM605 190h1v1h-1zM605 343h1v1h-1zM605 366h1v1h-1zM605 519h1v1h-1zM605 542h1v1h-1zM606 167h1v1h-1zM606 168h1v1h-1zM606 189h1v1h-1zM606 343h1v1h-1zM606 365h1v1h-1zM606 519h1v1h-1zM606 541h1v1h-1zM607 167h1v1h-1zM607 168h1v1h-1zM607 188h1v1h-1zM607 343h1v1h-1zM607 364h1v1h-1zM607 519h1v1h-1zM607 540h1v1h-1zM608 167h1v1h-1zM608 168h1v1h-1zM608 187h1v1h-1zM608 343h1v1h-1zM608 363h1v1h-1zM608 519h1v1h-1zM608 539h1v1h-1zM609 167h1v1h-1zM609 168h1v1h-1zM609 186h1v1h-1zM609 343h1v1h-1zM609 362h1v1h-1zM609 519h1v1h-1zM609 538h1v1h-1zM610 167h1v1h-1zM610 168h1v1h-1zM610 185h1v1h-1zM610 343h1v1h-1zM610 361h1v1h-1zM610 519h1v1h-1zM610 537h1v1h-1zM611 167h1v1h-1zM611 168h1v1h-1zM611 184h1v1h-1zM611 343h1v1h-1zM611 360h1v1h-1zM611 519h1v1h-1zM611 536h1v1h-1zM612 167h1v1h-1zM612 168h1v1h-1zM612 183h1v1h-1zM612 343h1v1h-1zM612 359h1v1h-1zM612 519h1v1h-1zM612 535h1v1h-1zM613 167h1v1h-1zM613 168h1v1h-1zM613 182h1v1h-1zM613 343h1v1h-1zM613 358h1v1h-1zM613 519h1v1h-1zM613 534h1v1h-1zM614 167h1v1h-1zM614 168h1v1h-1zM614 181h1v1h-1zM614 343h1v1h-1zM614 357h1v1h-1zM614 519h1v1h-1zM614 533h1v1h-1zM615 167h1v1h-1zM615 168h1v1h-1zM615 180h1v1h-1zM615 343h1v1h-1zM615 356h1v1h-1zM615 519h1v1h-1zM615 532h1v1h-1zM616 167h1v1h-1zM616 168h1v1h-1zM616 179h1v1h-1zM616 343h1v1h-1zM616 355h1v1h-1zM616 519h1v1h-1zM616 531h1v1h-1zM617 167h1v1h-1zM617 168h1v1h-1zM617 178h1v1h-1zM617 343h1v1h-1zM617 354h1v1h-1zM617 519h1v1h-1zM617 530h1v1h-1zM618 167h1v1h-1zM618 168h1v1h-1zM618 177h1v1h-1zM618 343h1v1h-1zM618 353h1v1h-1zM618 519h1v1h-1zM618 529h1v1h-1zM619 167h1v1h-1zM619 168h1v1h-1zM619 176h1v1h-1zM619 343h1v1h-1zM619 352h1v1h-1zM619 519h1v1h-1zM619 528h1v1h-1zM620 167h1v1h-1zM620 168h1v1h-1zM620 175h1v1h-1zM620 343h1v1h-1zM620 351h1v1h-1zM620 519h1v1h-1zM620 527h1v1h-1zM621 167h1v1h-1zM621 168h1v1h-1zM621 174h1v1h-1zM621 343h1v1h-1zM621 350h1v1h-1zM621 519h1v1h-1zM621 526h1v1h-1zM622 167h1v1h-1zM622 168h1v1h-1zM622 173h1v1h-1zM622 343h1v1h-1zM622 349h1v1h-1zM622 519h1v1h-1zM622 525h1v1h-1zM623 167h1v1h-1zM623 168h1v1h-1zM623 172h1v1h-1zM623 343h1v1h-1zM623 348h1v1h-1zM623 519h1v1h-1zM623 524h1v1h-1zM624 167h1v1h-1zM624 168h1v1h-1zM624 171h1v1h-1zM624 343h1v1h-1zM624 347h1v1h-1zM624 519h1v1h-1zM624 523h1v1h-1zM625 167h1v1h-1zM625 168h1v1h-1zM625 170h1v1h-1zM625 343h1v1h-1zM625 346h1v1h-1zM625 519h1v1h-1zM625 522h1v1h-1zM626 167h1v1h-1zM626 168h1v1h-1zM626 169h1v1h-1zM626 343h1v1h-1zM626 345h1v1h-1zM626 519h1v1h-1zM626 521h1v1h-1zM627 167h1v1h-1zM627 168h1v1h-1zM627 343h1v1h-1zM627 344h1v1h-1zM627 519h1v1h-1zM627 520h1v1h-1z"/>
<text transform="translate(264 162) scale(.75 1)" font-size="13.33" fill="#008080" stroke="#008080" stroke-width=".2">2_1|-c]1</text>
<text transform="translate(264 337) scale(.75 1)" font-size="13.33" fill="#008080" stroke="#008080" stroke-width=".2">2_1|-c]1</text>
<text transform="translate(264 513) scale(.75 1)" font-size="13.33" fill="#008080" stroke="#008080" stroke-width=".2">2_1|-c]1</text>
<text transform="translate(556 162) scale(.75 1)" font-size="13.33" fill="#008080" stroke="#008080" stroke-width=".2">2_1|-c]2</text>
<text transform="translate(556 337) scale(.75 1)" font-size="13.33" fill="#008080" stroke="#008080" stroke-width=".2">2_1|-c]2</text>
<text transform="translate(556 513) scale(.75 1)" font-size="13.33" fill="#008080" stroke="#008080" stroke-width=".2">2_1|-c]2</text>
<path clip-path="url(#vr0)" fill="#805000" d="M193 0h3v616h-3zM199 0h3v616h-3zM205 0h3v616h-3zM211 0h3v616h-3zM216 0h3v616h-3zM222 0h3v616h-3zM228 0h3v616h-3zM234 0h3v616h-3zM240 0h3v616h-3zM246 0h3v616h-3zM252 0h3v616h-3zM257 0h3v616h-3zM263 0h3v616h-3zM269 0h3v616h-3zM275 0h3v616h-3zM281 0h3v616h-3zM287 0h3v616h-3zM293 0h3v616h-3zM298 0h3v616h-3zM304 0h3v616h-3zM310 0h3v616h-3zM316 0h3v616h-3zM322 0h3v616h-3zM328 0h3v616h-3z"/>
<path clip-path="url(#vr1)" fill="#805000" d="M193 0h3v616h-3zM199 0h3v616h-3zM205 0h3v616h-3zM211 0h3v616h-3zM216 0h3v616h-3zM222 0h3v616h-3zM228 0h3v616h-3zM234 0h3v616h-3zM240 0h3v616h-3zM246 0h3v616h-3zM252 0h3v616h-3zM257 0h3v616h-3zM263 0h3v616h-3zM269 0h3v616h-3zM275 0h3v616h-3zM281 0h3v616h-3zM287 0h3v616h-3zM293 0h3v616h-3zM298 0h3v616h-3zM304 0h3v616h-3zM310 0h3v616h-3zM316 0h3v616h-3zM322 0h3v616h-3zM328 0h3v616h-3z"/>
<path clip-path="url(#vr2)" fill="#805000" d="M193 0h3v616h-3zM199 0h3v616h-3zM205 0h3v616h-3zM211 0h3v616h-3zM216 0h3v616h-3zM222 0h3v616h-3zM228 0h3v616h-3zM234 0h3v616h-3zM240 0h3v616h-3zM246 0h3v616h-3zM252 0h3v616h-3zM257 0h3v616h-3zM263 0h3v616h-3zM269 0h3v616h-3zM275 0h3v616h-3zM281 0h3v616h-3zM287 0h3v616h-3zM293 0h3v616h-3zM298 0h3v616h-3zM304 0h3v616h-3zM310 0h3v616h-3zM316 0h3v616h-3zM322 0h3v616h-3zM328 0h3v616h-3z"/>
<path clip-path="url(#vr0)" fill="#805000" d="M486 0h3v616h-3zM492 0h3v616h-3zM498 0h3v616h-3zM504 0h3v616h-3zM509 0h3v616h-3zM515 0h3v616h-3zM521 0h3v616h-3zM527 0h3v616h-3zM533 0h3v616h-3zM539 0h3v616h-3zM545 0h3v616h-3zM550 0h3v616h-3zM556 0h3v616h-3zM562 0h3v616h-3zM568 0h3v616h-3zM574 0h3v616h-3zM580 0h3v616h-3zM586 0h3v616h-3zM591 0h3v616h-3zM597 0h3v616h-3zM603 0h3v616h-3zM609 0h3v616h-3zM615 0h3v616h-3zM621 0h3v616h-3z"/>
<path clip-path="url(#vr1)" fill="#805000" d="M486 0h3v616h-3zM492 0h3v616h-3zM498 0h3v616h-3zM504 0h3v616h-3zM509 0h3v616h-3zM515 0h3v616h-3zM521 0h3v616h-3zM527 0h3v616h-3zM533 0h3v616h-3zM539 0h3v616h-3zM545 0h3v616h-3zM550 0h3v616h-3zM556 0h3v616h-3zM562 0h3v616h-3zM568 0h3v616h-3zM574 0h3v616h-3zM580 0h3v616h-3zM586 0h3v616h-3zM591 0h3v616h-3zM597 0h3v616h-3zM603 0h3v616h-3zM609 0h3v616h-3zM615 0h3v616h-3zM621 0h3v616h-3z"/>
<path clip-path="url(#vr2)" fill="#805000" d="M486 0h3v616h-3zM492 0h3v616h-3zM498 0h3v616h-3zM504 0h3v616h-3zM509 0h3v616h-3zM515 0h3v616h-3zM521 0h3v616h-3zM527 0h3v616h-3zM533 0h3v616h-3zM539 0h3v616h-3zM545 0h3v616h-3zM550 0h3v616h-3zM556 0h3v616h-3zM562 0h3v616h-3zM568 0h3v616h-3zM574 0h3v616h-3zM580 0h3v616h-3zM586 0h3v616h-3zM591 0h3v616h-3zM597 0h3v616h-3zM603 0h3v616h-3zM609 0h3v616h-3zM615 0h3v616h-3zM621 0h3v616h-3z"/>
<path fill="#008080" d="M188 21h147v148h-147zM189 22v146h145v-146z" fill-rule="evenodd"/>
<path fill="#008080" d="M188 197h147v147h-147zM189 198v145h145v-145z" fill-rule="evenodd"/>
<path fill="#008080" d="M188 373h147v147h-147zM189 374v145h145v-145z" fill-rule="evenodd"/>
<rect x="188" y="167" width="147" height="1" fill="#008080"/>
<path fill="#008080" d="M481 21h147v148h-147zM482 22v146h145v-146z" fill-rule="evenodd"/>
<path fill="#008080" d="M481 197h147v147h-147zM482 198v145h145v-145z" fill-rule="evenodd"/>
<path fill="#008080" d="M481 373h147v147h-147zM482 374v145h145v-145z" fill-rule="evenodd"/>
<rect x="481" y="167" width="147" height="1" fill="#008080"/>
<path fill="#808080" d="M28 585h60v7h-60zM88 585h58v1h-58zM88 591h58v1h-58zM145 586h1v5h-1z"/>
<text x="105" y="579" font-size="13.33" fill="#808080" xml:space="preserve">40 µm</text>
</svg></body></html>
